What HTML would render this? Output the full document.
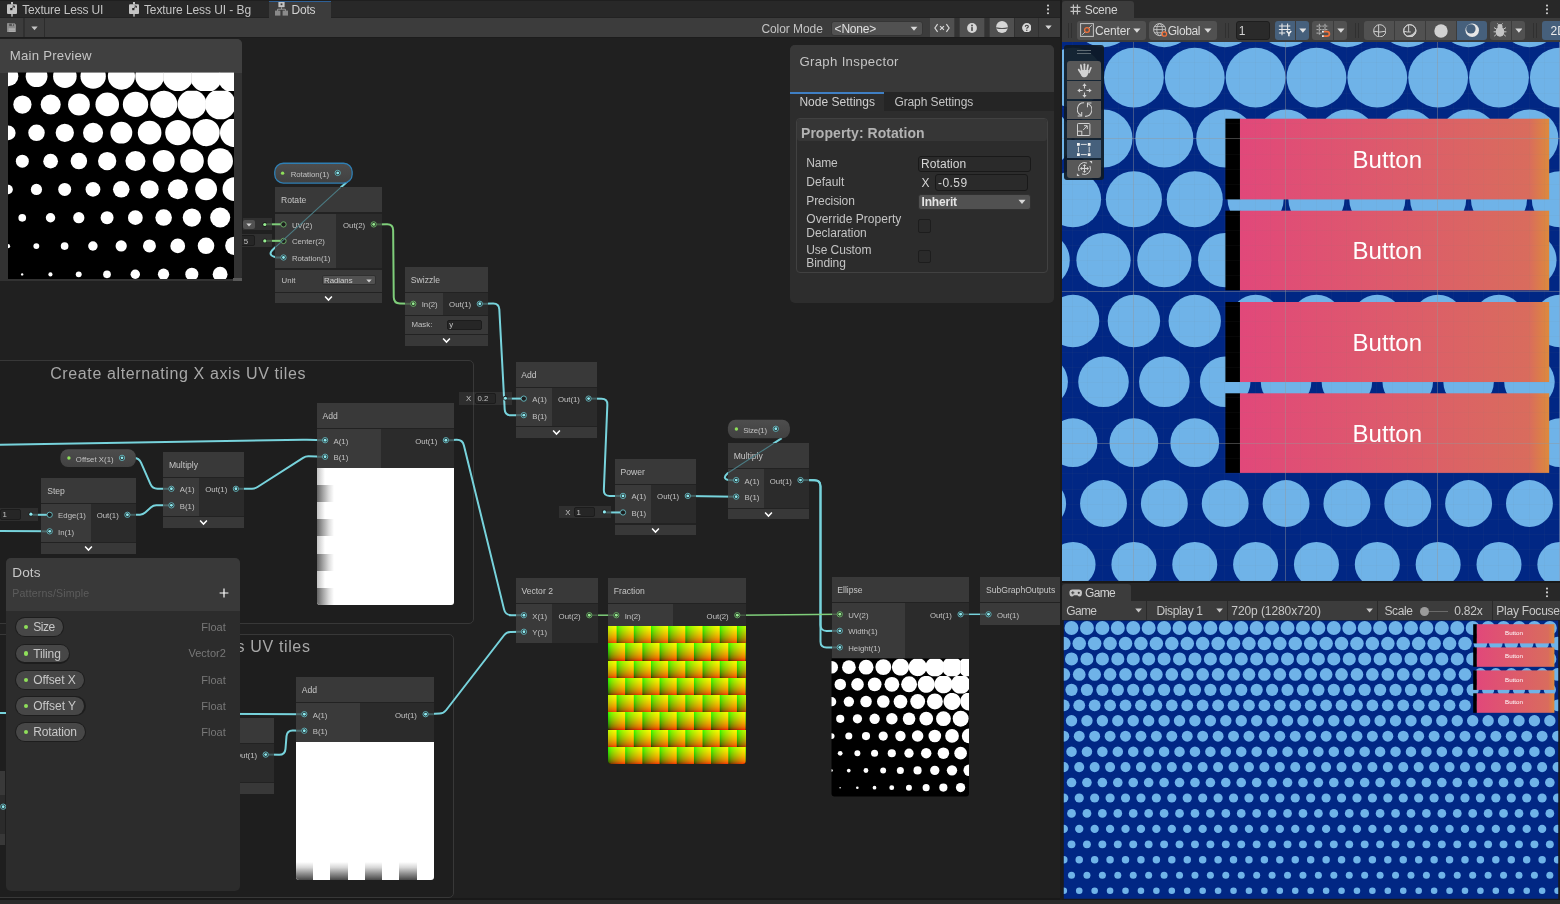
<!DOCTYPE html><html><head><meta charset="utf-8"><title>Unity</title><style>
*{box-sizing:border-box;margin:0;padding:0}
html,body{width:1560px;height:904px;overflow:hidden;background:#1b1b1b;font-family:"Liberation Sans",sans-serif;}
.b{position:absolute;display:block}
.t{position:absolute;white-space:nowrap;line-height:1;}
#L{will-change:transform;position:absolute;left:0;top:0;width:1059.5px;height:904px;overflow:hidden;background:#202020}
#R{will-change:transform;position:absolute;left:1062px;top:0;width:498px;height:904px;overflow:hidden;background:#1b1b1b}
svg{position:absolute;overflow:hidden}
</style></head><body>
<div id="L">
<div class="b" style="left:-10px;top:360px;width:484px;height:264.3px;border:1px solid #383838;border-radius:5px;background:rgba(0,0,0,0.06)"></div>
<div class="b" style="left:-10px;top:634.1px;width:463.5px;height:263.9px;border:1px solid #383838;border-radius:5px;background:rgba(0,0,0,0.06)"></div>
<div class="t" style="left:50.2px;top:365.86px;font-size:16px;color:#a8a8a8;letter-spacing:0.62px;">Create alternating X axis UV tiles</div>
<div class="t" style="left:54.6px;top:639.26px;font-size:16px;color:#a8a8a8;letter-spacing:0.64px;">Create alternating Y axis UV tiles</div>
<svg class="b" style="left:0;top:0" width="1060" height="904" viewBox="0 0 1060 904"><path d="M373.7,224.4L387.1,224.33Q393.1,224.3 393.15,230.3L393.75,297.3Q393.8,303.3 399.8,303.45L413.3,303.8" stroke="#7fce7a" stroke-width="2" fill="none" stroke-linecap="butt"/><path d="M479.8,303.8L493,303.52Q499,303.4 499.32,309.39L504.68,409.41Q505,415.4 511,415.32L523.8,415.15" stroke="#77d3dc" stroke-width="2" fill="none" stroke-linecap="butt"/><path d="M588.6,398.6L601.6,398.74Q607.6,398.8 607.35,404.79L603.85,489.91Q603.6,495.9 609.6,495.9L623,495.9" stroke="#77d3dc" stroke-width="2" fill="none" stroke-linecap="butt"/><path d="M687.8,495.9L736.2,496.65" stroke="#77d3dc" stroke-width="2" fill="none" stroke-linecap="butt"/><path d="M800.5,480.1L814.5,480.31Q820.5,480.4 820.5,486.4L820.5,624.9Q820.5,630.9 826.5,630.88L839.8,630.85" stroke="#77d3dc" stroke-width="2" fill="none" stroke-linecap="butt"/><path d="M800.5,480.1L814.5,480.31Q820.5,480.4 820.5,486.4L820.5,641.5Q820.5,647.5 826.5,647.47L839.8,647.4" stroke="#77d3dc" stroke-width="2" fill="none" stroke-linecap="butt"/><path d="M737.3,615.2L839.8,614.3" stroke="#7fce7a" stroke-width="1.5" fill="none" stroke-linecap="butt"/><path d="M589.3,615.2L616.3,615.2" stroke="#7fce7a" stroke-width="1.5" fill="none" stroke-linecap="butt"/><path d="M960.6,614.3L988.5,614.3" stroke="#77d3dc" stroke-width="1.5" fill="none" stroke-linecap="butt"/><path d="M445.9,440.2L456.5,439.82Q462.5,439.6 463.93,445.43L504.07,609.37Q505.5,615.2 511.5,615.2L523.9,615.2" stroke="#77d3dc" stroke-width="2" fill="none" stroke-linecap="butt"/><path d="M425.6,714.2L439.6,713.58Q443.6,713.4 446.05,710.24L504.05,635.26Q506.5,632.1 510.5,632.02L523.9,631.75" stroke="#77d3dc" stroke-width="2" fill="none" stroke-linecap="butt"/><path d="M-5,444.9L303,439.73Q305,439.7 307,439.75L325.1,440.2" stroke="#77d3dc" stroke-width="2" fill="none" stroke-linecap="butt"/><path d="M235.9,488.8L252,488.63Q255,488.6 257.53,486.99L303.07,457.91Q305.6,456.3 308.6,456.37L325.1,456.75" stroke="#77d3dc" stroke-width="2" fill="none" stroke-linecap="butt"/><path d="M122,458L134,458Q139,458 141.02,462.57L150.48,484.03Q152.5,488.6 157.5,488.65L171.4,488.8" stroke="#77d3dc" stroke-width="2" fill="none" stroke-linecap="butt"/><path d="M127.4,514.8L140,514.64Q143,514.6 145.22,512.58L151.08,507.22Q153.3,505.2 156.3,505.22L171.4,505.35" stroke="#77d3dc" stroke-width="2" fill="none" stroke-linecap="butt"/><path d="M-5,530.9L49.7,531.35" stroke="#77d3dc" stroke-width="2" fill="none" stroke-linecap="butt"/><path d="M265.7,754.6L279,754.74Q285,754.8 285.49,748.82L286.51,736.18Q287,730.2 293,730.39L304.3,730.75" stroke="#77d3dc" stroke-width="2" fill="none" stroke-linecap="butt"/><path d="M-5,713L304.3,714.2" stroke="#77d3dc" stroke-width="2" fill="none" stroke-linecap="butt"/><path d="M347.5,181.2 L345.7,182.9 L273.7,248.7 Q267.4,254.4 273.7,256.6 Q276,257.4 283.6,257.5" stroke="#77d3dc" stroke-width="2" fill="none"/><path d="M781.8,438.2 L727.6,473.2 Q721.6,478.5 728.6,479.9 L735.9,480.3" stroke="#77d3dc" stroke-width="2" fill="none"/></svg>
<svg class="b" style="left:0;top:0" width="1060" height="904" viewBox="0 0 1060 904"><defs><linearGradient id="pillg" x1="0" x2="0" y1="0" y2="1"><stop offset="0" stop-color="#4d4d4d"/><stop offset="1" stop-color="#414141"/></linearGradient></defs><rect x="274.75" y="163.25" width="77.4" height="19.8" rx="8.6" fill="url(#pillg)" stroke="#2f7fb4" stroke-width="1.3"/><rect x="727.9" y="419.8" width="62" height="18.4" rx="7.6" fill="url(#pillg)"/><rect x="60.4" y="449.2" width="75.5" height="17.7" rx="7.6" fill="url(#pillg)"/></svg>
<div class="t" style="left:290.7px;top:171.05px;font-size:7.8px;color:#c2c2c2;letter-spacing:-0.02px;">Rotation(1)</div><div class="b" style="left:275.2px;top:188.4px;width:106.8px;height:114.85px;background:#222222;"></div><div class="b" style="left:275.2px;top:187.4px;width:106.8px;height:25px;background:#393939;"></div><div class="t" style="left:281px;top:196.42px;font-size:8.6px;color:#c6c6c6;">Rotate</div><div class="b" style="left:275.2px;top:212.4px;width:106.8px;height:1.1px;background:#222222;"></div><div class="b" style="left:275.2px;top:213.5px;width:60.8px;height:54.95px;background:#3a3a3a;"></div><div class="b" style="left:336px;top:213.5px;width:46px;height:54.95px;background:#2b2b2b;"></div><div class="t" style="left:291.9px;top:221.9px;font-size:7.8px;color:#c2c2c2;">UV(2)</div><div class="t" style="left:291.9px;top:238.45px;font-size:7.8px;color:#c2c2c2;">Center(2)</div><div class="t" style="left:291.9px;top:255px;font-size:7.8px;color:#c2c2c2;">Rotation(1)</div><div class="t" style="left:342.99px;top:221.9px;font-size:7.8px;color:#c2c2c2;">Out(2)</div><div class="b" style="left:275.2px;top:268.45px;width:106.8px;height:1.1px;background:#222222;"></div><div class="b" style="left:275.2px;top:269.55px;width:106.8px;height:22px;background:#393939;"></div><div class="t" style="left:281.6px;top:276.75px;font-size:7.8px;color:#c2c2c2;">Unit</div><div class="b" style="left:322px;top:275.35px;width:54px;height:10px;background:#515151;border-radius:2px;border:0.6px solid #303030"></div><div class="t" style="left:324px;top:276.65px;font-size:7.8px;color:#d0d0d0;">Radians</div><svg class="b" style="left:366.4px;top:278.75px" width="6" height="4" viewBox="0 0 6 4"><path d="M0.3,0.4 L5.7,0.4 L3,3.6Z" fill="#d0d0d0"/></svg><div class="b" style="left:275.2px;top:291.55px;width:106.8px;height:1.1px;background:#222222;"></div><div class="b" style="left:275.2px;top:292.65px;width:106.8px;height:10.6px;background:#383838;"></div><svg class="b" style="left:324.1px;top:294.65px" width="9" height="7" viewBox="0 0 9 7"><path d="M1.1,1.5 L4.5,5.1 L7.9,1.5" stroke="#fff" stroke-width="1.5" fill="none"/></svg><div class="b" style="left:405px;top:267.8px;width:83.1px;height:77.95px;background:#222222;"></div><div class="b" style="left:405px;top:266.8px;width:83.1px;height:25px;background:#393939;"></div><div class="t" style="left:410.8px;top:275.82px;font-size:8.6px;color:#c6c6c6;">Swizzle</div><div class="b" style="left:405px;top:291.8px;width:83.1px;height:1.1px;background:#222222;"></div><div class="b" style="left:405px;top:292.9px;width:38.2px;height:21.85px;background:#3a3a3a;"></div><div class="b" style="left:443.2px;top:292.9px;width:44.9px;height:21.85px;background:#2b2b2b;"></div><div class="t" style="left:421.7px;top:301.3px;font-size:7.8px;color:#c2c2c2;">In(2)</div><div class="t" style="left:449.09px;top:301.3px;font-size:7.8px;color:#c2c2c2;">Out(1)</div><div class="b" style="left:405px;top:314.75px;width:83.1px;height:1.1px;background:#222222;"></div><div class="b" style="left:405px;top:315.85px;width:83.1px;height:18.2px;background:#393939;"></div><div class="t" style="left:411.5px;top:321.15px;font-size:7.8px;color:#c2c2c2;">Mask:</div><div class="b" style="left:447.1px;top:319.75px;width:34.5px;height:10.4px;background:#262626;border:1px solid #1c1c1c;border-radius:2px"></div><div class="t" style="left:449.3px;top:320.85px;font-size:7.8px;color:#c2c2c2;">y</div><div class="b" style="left:405px;top:334.05px;width:83.1px;height:1.1px;background:#222222;"></div><div class="b" style="left:405px;top:335.15px;width:83.1px;height:10.6px;background:#383838;"></div><svg class="b" style="left:442.05px;top:337.15px" width="9" height="7" viewBox="0 0 9 7"><path d="M1.1,1.5 L4.5,5.1 L7.9,1.5" stroke="#fff" stroke-width="1.5" fill="none"/></svg><div class="b" style="left:515.5px;top:362.6px;width:81.4px;height:75.2px;background:#222222;"></div><div class="b" style="left:515.5px;top:361.6px;width:81.4px;height:25px;background:#393939;"></div><div class="t" style="left:521.3px;top:370.62px;font-size:8.6px;color:#c6c6c6;">Add</div><div class="b" style="left:515.5px;top:386.6px;width:81.4px;height:1.1px;background:#222222;"></div><div class="b" style="left:515.5px;top:387.7px;width:36.7px;height:38.4px;background:#3a3a3a;"></div><div class="b" style="left:552.2px;top:387.7px;width:44.7px;height:38.4px;background:#2b2b2b;"></div><div class="t" style="left:532.2px;top:396.1px;font-size:7.8px;color:#c2c2c2;">A(1)</div><div class="t" style="left:532.2px;top:412.65px;font-size:7.8px;color:#c2c2c2;">B(1)</div><div class="t" style="left:557.89px;top:396.1px;font-size:7.8px;color:#c2c2c2;">Out(1)</div><div class="b" style="left:515.5px;top:426.1px;width:81.4px;height:1.1px;background:#222222;"></div><div class="b" style="left:515.5px;top:427.2px;width:81.4px;height:10.6px;background:#383838;"></div><svg class="b" style="left:551.7px;top:429.2px" width="9" height="7" viewBox="0 0 9 7"><path d="M1.1,1.5 L4.5,5.1 L7.9,1.5" stroke="#fff" stroke-width="1.5" fill="none"/></svg><div class="b" style="left:614.7px;top:459.9px;width:81.4px;height:75.2px;background:#222222;"></div><div class="b" style="left:614.7px;top:458.9px;width:81.4px;height:25px;background:#393939;"></div><div class="t" style="left:620.5px;top:467.92px;font-size:8.6px;color:#c6c6c6;">Power</div><div class="b" style="left:614.7px;top:483.9px;width:81.4px;height:1.1px;background:#222222;"></div><div class="b" style="left:614.7px;top:485px;width:36.3px;height:38.4px;background:#3a3a3a;"></div><div class="b" style="left:651px;top:485px;width:45.1px;height:38.4px;background:#2b2b2b;"></div><div class="t" style="left:631.4px;top:493.4px;font-size:7.8px;color:#c2c2c2;">A(1)</div><div class="t" style="left:631.4px;top:509.95px;font-size:7.8px;color:#c2c2c2;">B(1)</div><div class="t" style="left:657.09px;top:493.4px;font-size:7.8px;color:#c2c2c2;">Out(1)</div><div class="b" style="left:614.7px;top:523.4px;width:81.4px;height:1.1px;background:#222222;"></div><div class="b" style="left:614.7px;top:524.5px;width:81.4px;height:10.6px;background:#383838;"></div><svg class="b" style="left:650.9px;top:526.5px" width="9" height="7" viewBox="0 0 9 7"><path d="M1.1,1.5 L4.5,5.1 L7.9,1.5" stroke="#fff" stroke-width="1.5" fill="none"/></svg><div class="t" style="left:743.3px;top:426.9px;font-size:7.8px;color:#c2c2c2;letter-spacing:-0.14px;">Size(1)</div><div class="b" style="left:727.9px;top:444.1px;width:80.9px;height:75.2px;background:#222222;"></div><div class="b" style="left:727.9px;top:443.1px;width:80.9px;height:25px;background:#393939;"></div><div class="t" style="left:733.7px;top:452.12px;font-size:8.6px;color:#c6c6c6;">Multiply</div><div class="b" style="left:727.9px;top:468.1px;width:80.9px;height:1.1px;background:#222222;"></div><div class="b" style="left:727.9px;top:469.2px;width:36.1px;height:38.4px;background:#3a3a3a;"></div><div class="b" style="left:764px;top:469.2px;width:44.8px;height:38.4px;background:#2b2b2b;"></div><div class="t" style="left:744.6px;top:477.6px;font-size:7.8px;color:#c2c2c2;">A(1)</div><div class="t" style="left:744.6px;top:494.15px;font-size:7.8px;color:#c2c2c2;">B(1)</div><div class="t" style="left:769.79px;top:477.6px;font-size:7.8px;color:#c2c2c2;">Out(1)</div><div class="b" style="left:727.9px;top:507.6px;width:80.9px;height:1.1px;background:#222222;"></div><div class="b" style="left:727.9px;top:508.7px;width:80.9px;height:10.6px;background:#383838;"></div><svg class="b" style="left:763.85px;top:510.7px" width="9" height="7" viewBox="0 0 9 7"><path d="M1.1,1.5 L4.5,5.1 L7.9,1.5" stroke="#fff" stroke-width="1.5" fill="none"/></svg><div class="b" style="left:831.5px;top:578.3px;width:137.4px;height:80.05px;background:#222222;"></div><div class="b" style="left:831.5px;top:577.3px;width:137.4px;height:25px;background:#393939;"></div><div class="t" style="left:837.3px;top:586.32px;font-size:8.6px;color:#c6c6c6;">Ellipse</div><div class="b" style="left:831.5px;top:602.3px;width:137.4px;height:1.1px;background:#222222;"></div><div class="b" style="left:831.5px;top:603.4px;width:73.5px;height:54.95px;background:#3a3a3a;"></div><div class="b" style="left:905px;top:603.4px;width:63.9px;height:54.95px;background:#2b2b2b;"></div><div class="t" style="left:848.2px;top:611.8px;font-size:7.8px;color:#c2c2c2;">UV(2)</div><div class="t" style="left:848.2px;top:628.35px;font-size:7.8px;color:#c2c2c2;">Width(1)</div><div class="t" style="left:848.2px;top:644.9px;font-size:7.8px;color:#c2c2c2;">Height(1)</div><div class="t" style="left:929.89px;top:611.8px;font-size:7.8px;color:#c2c2c2;">Out(1)</div><svg class="b" style="left:831px;top:658px" width="138" height="139" viewBox="0 0 138 139"><defs><clipPath id="hc1"><path d="M0.5,0.5H138V135.5Q138,138.5 135,138.5H3.5Q0.5,138.5 0.5,135.5Z"/></clipPath></defs><g clip-path="url(#hc1)"><rect x="0" y="0" width="138" height="139" fill="#000"/><g fill="#fff" transform="translate(0.5,0.9)"><circle cx="0.2" cy="8.29" r="6.3"/><circle cx="17.41" cy="8.26" r="6.86"/><circle cx="34.61" cy="8.24" r="7.41"/><circle cx="51.82" cy="8.21" r="7.97"/><polygon points="77.53,8.59 77.46,9.36 77.32,10.11 77.12,10.84 76.85,11.54 76.52,12.22 76.14,12.86 75.7,13.46 75.22,14.02 74.69,14.54 74.13,15 73.53,15.41 72.89,15.77 72.24,16.07 71.56,16.32 70.87,16.5 70.17,16.63 69.46,16.69 68.75,16.7 68.05,16.65 67.35,16.54 66.66,16.38 66,16.15 65.35,15.88 64.73,15.55 64.14,15.17 63.58,14.75 63.06,14.28 62.58,13.77 62.15,13.22 61.75,12.63 61.41,12.02 61.12,11.37 60.88,10.7 60.7,10.01 60.58,9.31 60.52,8.59 60.51,7.87 60.57,7.15 60.69,6.43 60.87,5.73 61.11,5.03 61.42,4.36 61.78,3.71 62.2,3.1 62.67,2.51 63.2,1.98 63.77,1.48 64.39,1.04 65.05,0.65 65.74,0.32 66.46,0.06 67.21,-0.14 67.98,-0.2 68.75,-0.2 69.52,-0.2 70.3,-0.2 71.08,-0.09 71.83,0.13 72.56,0.42 73.26,0.78 73.93,1.2 74.55,1.68 75.12,2.22 75.65,2.81 76.11,3.44 76.52,4.11 76.86,4.81 77.13,5.54 77.34,6.29 77.47,7.06 77.54,7.82"/><polygon points="94.73,8.59 94.73,9.36 94.73,10.14 94.73,10.95 94.57,11.73 94.22,12.46 93.81,13.14 93.35,13.78 92.83,14.38 92.27,14.93 91.67,15.42 91.02,15.86 90.35,16.24 89.65,16.56 88.93,16.82 88.19,17.02 87.45,17.15 86.69,17.22 85.94,17.23 85.19,17.18 84.44,17.06 83.72,16.88 83.01,16.65 82.32,16.36 81.66,16.01 81.03,15.6 80.43,15.15 79.88,14.65 79.37,14.11 78.9,13.52 78.48,12.9 78.12,12.24 77.81,11.55 77.56,10.84 77.36,10.11 77.23,9.36 77.17,8.59 77.16,7.83 77.22,7.06 77.35,6.29 77.54,5.54 77.8,4.8 78.13,4.08 78.51,3.39 78.96,2.74 79.46,2.12 80.02,1.54 80.63,1.02 81.29,0.54 81.99,0.13 82.74,-0.2 83.58,-0.2 84.39,-0.2 85.17,-0.2 85.94,-0.2 86.71,-0.2 87.49,-0.2 88.29,-0.2 89.14,-0.2 90,-0.11 90.74,0.27 91.45,0.72 92.12,1.23 92.73,1.8 93.28,2.43 93.78,3.1 94.21,3.82 94.57,4.57 94.73,5.39 94.73,6.24 94.73,7.04 94.73,7.82"/><polygon points="111.92,8.59 111.92,9.36 111.92,10.14 111.92,10.95 111.92,11.79 111.91,12.69 111.48,13.42 110.99,14.1 110.44,14.73 109.85,15.31 109.2,15.84 108.52,16.31 107.81,16.71 107.07,17.05 106.3,17.33 105.48,17.39 104.68,17.39 103.89,17.39 103.12,17.39 102.36,17.39 101.57,17.39 100.77,17.39 100.01,17.14 99.28,16.83 98.58,16.46 97.91,16.03 97.28,15.55 96.7,15.02 96.15,14.45 95.66,13.82 95.21,13.16 94.83,12.46 94.5,11.73 94.33,10.95 94.33,10.14 94.33,9.36 94.33,8.59 94.33,7.82 94.33,7.04 94.33,6.24 94.33,5.39 94.49,4.57 94.83,3.81 95.24,3.07 95.72,2.38 96.25,1.72 96.84,1.11 97.49,0.55 98.19,0.05 99.02,-0.2 99.92,-0.2 100.77,-0.2 101.57,-0.2 102.36,-0.2 103.12,-0.2 103.89,-0.2 104.68,-0.2 105.48,-0.2 106.33,-0.2 107.23,-0.2 108.2,-0.2 108.98,0.23 109.68,0.78 110.33,1.39 110.92,2.05 111.45,2.76 111.91,3.52 111.92,4.49 111.92,5.39 111.92,6.24 111.92,7.04 111.92,7.82"/><polygon points="129.11,8.59 129.11,9.36 129.11,10.14 129.11,10.95 129.11,11.79 129.11,12.69 129.11,13.67 128.63,14.42 128.05,15.09 127.42,15.7 126.74,16.26 126.02,16.75 125.27,17.18 124.41,17.39 123.51,17.39 122.67,17.39 121.86,17.39 121.08,17.39 120.31,17.39 119.54,17.39 118.76,17.39 117.96,17.39 117.11,17.39 116.25,17.31 115.51,16.92 114.8,16.47 114.13,15.96 113.51,15.4 112.94,14.78 112.41,14.13 111.94,13.43 111.53,12.69 111.52,11.79 111.52,10.95 111.52,10.14 111.52,9.36 111.52,8.59 111.52,7.82 111.52,7.04 111.52,6.24 111.52,5.39 111.52,4.49 111.54,3.53 111.97,2.75 112.47,2.02 113.04,1.32 113.67,0.68 114.36,0.09 115.24,-0.2 116.21,-0.2 117.11,-0.2 117.96,-0.2 118.76,-0.2 119.54,-0.2 120.31,-0.2 121.08,-0.2 121.86,-0.2 122.67,-0.2 123.51,-0.2 124.41,-0.2 125.39,-0.2 126.47,-0.2 127.25,0.33 127.94,0.97 128.56,1.67 129.11,2.44 129.11,3.52 129.11,4.49 129.11,5.39 129.11,6.24 129.11,7.04 129.11,7.82"/><polygon points="146.29,8.59 146.29,9.36 146.29,10.14 146.29,10.95 146.29,11.79 146.29,12.69 146.29,13.67 146.27,14.74 145.66,15.44 145,16.09 144.28,16.68 143.52,17.2 142.58,17.39 141.6,17.39 140.7,17.39 139.86,17.39 139.05,17.39 138.27,17.39 137.5,17.39 136.73,17.39 135.95,17.39 135.14,17.39 134.3,17.39 133.4,17.39 132.43,17.37 131.69,16.9 130.98,16.36 130.33,15.77 129.72,15.12 129.17,14.43 128.71,13.67 128.71,12.69 128.71,11.79 128.71,10.95 128.71,10.14 128.71,9.36 128.71,8.59 128.71,7.82 128.71,7.04 128.71,6.24 128.71,5.39 128.71,4.49 128.71,3.52 128.71,2.44 129.23,1.66 129.83,0.92 130.49,0.24 131.34,-0.2 132.42,-0.2 133.4,-0.2 134.3,-0.2 135.14,-0.2 135.95,-0.2 136.73,-0.2 137.5,-0.2 138.27,-0.2 139.05,-0.2 139.86,-0.2 140.7,-0.2 141.6,-0.2 142.58,-0.2 143.66,-0.2 144.82,-0.12 145.54,0.55 146.2,1.29 146.29,2.44 146.29,3.52 146.29,4.49 146.29,5.39 146.29,6.24 146.29,7.04 146.29,7.82"/><circle cx="8.78" cy="25.5" r="5.74"/><circle cx="25.99" cy="25.48" r="6.3"/><circle cx="43.19" cy="25.45" r="6.86"/><circle cx="60.4" cy="25.42" r="7.42"/><circle cx="77.6" cy="25.4" r="7.97"/><polygon points="103.32,25.78 103.25,26.54 103.11,27.29 102.9,28.02 102.63,28.73 102.31,29.41 101.92,30.05 101.49,30.65 101,31.21 100.48,31.73 99.91,32.19 99.31,32.6 98.68,32.96 98.02,33.26 97.34,33.51 96.65,33.69 95.95,33.82 95.24,33.89 94.53,33.89 93.83,33.84 93.13,33.73 92.45,33.57 91.78,33.35 91.13,33.07 90.51,32.74 89.92,32.36 89.36,31.94 88.84,31.47 88.36,30.96 87.92,30.41 87.53,29.82 87.19,29.2 86.9,28.56 86.66,27.89 86.48,27.2 86.36,26.5 86.29,25.78 86.29,25.06 86.35,24.34 86.47,23.62 86.65,22.91 86.89,22.22 87.2,21.55 87.56,20.9 87.98,20.28 88.45,19.7 88.98,19.16 89.55,18.67 90.17,18.22 90.83,17.84 91.52,17.51 92.24,17.24 92.99,17.04 93.76,16.99 94.53,16.99 95.3,16.99 96.08,16.99 96.86,17.09 97.61,17.31 98.34,17.6 99.04,17.96 99.71,18.39 100.33,18.87 100.91,19.4 101.43,19.99 101.9,20.62 102.3,21.3 102.64,22 102.92,22.73 103.12,23.48 103.26,24.24 103.32,25.01"/><polygon points="120.51,25.78 120.51,26.55 120.51,27.33 120.51,28.14 120.35,28.92 120,29.64 119.59,30.33 119.13,30.97 118.62,31.57 118.05,32.12 117.45,32.61 116.81,33.05 116.14,33.43 115.44,33.75 114.71,34.01 113.98,34.21 113.23,34.34 112.47,34.42 111.72,34.42 110.97,34.37 110.23,34.25 109.5,34.08 108.79,33.84 108.1,33.55 107.44,33.2 106.81,32.79 106.21,32.34 105.66,31.84 105.15,31.3 104.68,30.71 104.26,30.09 103.9,29.43 103.59,28.74 103.33,28.03 103.14,27.29 103.01,26.54 102.94,25.78 102.94,25.01 103,24.24 103.13,23.48 103.32,22.73 103.58,21.99 103.9,21.27 104.29,20.58 104.74,19.92 105.24,19.3 105.8,18.73 106.41,18.2 107.07,17.73 107.77,17.32 108.52,16.99 109.36,16.99 110.17,16.99 110.95,16.99 111.72,16.99 112.49,16.99 113.27,16.99 114.08,16.99 114.92,16.99 115.78,17.07 116.53,17.45 117.24,17.9 117.9,18.42 118.51,18.99 119.07,19.61 119.56,20.29 120,21 120.36,21.75 120.51,22.58 120.51,23.42 120.51,24.23 120.51,25.01"/><polygon points="137.7,25.78 137.7,26.55 137.7,27.33 137.7,28.14 137.7,28.98 137.7,29.88 137.27,30.61 136.77,31.29 136.23,31.92 135.63,32.5 134.99,33.03 134.31,33.5 133.59,33.9 132.85,34.24 132.09,34.52 131.26,34.58 130.46,34.58 129.68,34.58 128.91,34.58 128.14,34.58 127.36,34.58 126.55,34.58 125.79,34.33 125.06,34.02 124.36,33.65 123.69,33.23 123.06,32.74 122.47,32.21 121.93,31.64 121.43,31.01 120.99,30.35 120.6,29.65 120.28,28.92 120.11,28.14 120.11,27.33 120.11,26.55 120.11,25.78 120.11,25.01 120.11,24.23 120.11,23.42 120.11,22.58 120.27,21.75 120.61,20.99 121.02,20.26 121.49,19.56 122.03,18.9 122.62,18.29 123.27,17.74 123.97,17.23 124.81,16.99 125.71,16.99 126.55,16.99 127.36,16.99 128.14,16.99 128.91,16.99 129.68,16.99 130.46,16.99 131.26,16.99 132.11,16.99 133.01,16.99 133.98,16.99 134.76,17.42 135.47,17.96 136.12,18.57 136.71,19.24 137.23,19.95 137.69,20.71 137.7,21.68 137.7,22.58 137.7,23.42 137.7,24.23 137.7,25.01"/><circle cx="0.15" cy="42.75" r="4.63"/><circle cx="17.36" cy="42.72" r="5.19"/><circle cx="34.56" cy="42.69" r="5.75"/><circle cx="51.77" cy="42.66" r="6.31"/><circle cx="68.97" cy="42.64" r="6.86"/><circle cx="86.18" cy="42.61" r="7.42"/><circle cx="103.38" cy="42.58" r="7.98"/><polygon points="129.1,42.97 129.03,43.73 128.89,44.48 128.69,45.21 128.42,45.92 128.09,46.6 127.71,47.24 127.27,47.84 126.79,48.4 126.26,48.92 125.69,49.38 125.09,49.79 124.46,50.15 123.8,50.45 123.13,50.7 122.43,50.88 121.73,51.01 121.02,51.08 120.31,51.08 119.61,51.03 118.91,50.92 118.23,50.76 117.56,50.54 116.91,50.26 116.29,49.93 115.7,49.55 115.14,49.13 114.62,48.66 114.14,48.15 113.7,47.6 113.31,47.01 112.97,46.39 112.68,45.75 112.44,45.08 112.26,44.39 112.14,43.68 112.07,42.97 112.07,42.25 112.13,41.53 112.25,40.81 112.43,40.1 112.67,39.41 112.97,38.73 113.34,38.08 113.75,37.47 114.23,36.88 114.75,36.34 115.33,35.85 115.95,35.41 116.61,35.02 117.3,34.69 118.02,34.42 118.77,34.22 119.54,34.17 120.31,34.17 121.08,34.17 121.86,34.17 122.64,34.27 123.4,34.5 124.13,34.79 124.83,35.15 125.49,35.57 126.12,36.05 126.69,36.59 127.21,37.18 127.68,37.81 128.09,38.48 128.43,39.19 128.7,39.92 128.91,40.67 129.04,41.43 129.11,42.2"/><polygon points="146.29,42.97 146.29,43.74 146.29,44.52 146.29,45.33 146.14,46.11 145.79,46.83 145.38,47.52 144.91,48.16 144.4,48.76 143.84,49.31 143.23,49.8 142.59,50.24 141.92,50.62 141.22,50.94 140.5,51.2 139.76,51.4 139.01,51.53 138.26,51.61 137.5,51.61 136.75,51.56 136.01,51.44 135.28,51.27 134.57,51.03 133.88,50.74 133.22,50.39 132.59,49.98 131.99,49.53 131.44,49.03 130.92,48.49 130.46,47.9 130.04,47.28 129.68,46.62 129.37,45.93 129.11,45.22 128.92,44.48 128.79,43.73 128.72,42.97 128.72,42.2 128.78,41.43 128.91,40.67 129.1,39.91 129.36,39.17 129.68,38.45 130.07,37.76 130.51,37.11 131.02,36.49 131.58,35.91 132.19,35.39 132.85,34.91 133.55,34.5 134.3,34.17 135.14,34.17 135.95,34.17 136.73,34.17 137.5,34.17 138.27,34.17 139.05,34.17 139.86,34.17 140.7,34.17 141.56,34.25 142.31,34.64 143.02,35.09 143.68,35.6 144.3,36.17 144.85,36.8 145.35,37.47 145.78,38.19 146.14,38.94 146.29,39.77 146.29,40.61 146.29,41.42 146.29,42.2"/><circle cx="8.73" cy="59.96" r="4.08"/><circle cx="25.93" cy="59.93" r="4.64"/><circle cx="43.14" cy="59.91" r="5.19"/><circle cx="60.34" cy="59.88" r="5.75"/><circle cx="77.55" cy="59.85" r="6.31"/><circle cx="94.75" cy="59.82" r="6.87"/><circle cx="111.96" cy="59.8" r="7.42"/><circle cx="129.16" cy="59.77" r="7.98"/><circle cx="0.1" cy="77.2" r="2.97"/><circle cx="17.3" cy="77.17" r="3.52"/><circle cx="34.51" cy="77.15" r="4.08"/><circle cx="51.71" cy="77.12" r="4.64"/><circle cx="68.92" cy="77.09" r="5.2"/><circle cx="86.12" cy="77.07" r="5.75"/><circle cx="103.33" cy="77.04" r="6.31"/><circle cx="120.53" cy="77.01" r="6.87"/><circle cx="137.74" cy="76.98" r="7.43"/><circle cx="8.67" cy="94.41" r="2.41"/><circle cx="25.88" cy="94.39" r="2.97"/><circle cx="43.08" cy="94.36" r="3.53"/><circle cx="60.29" cy="94.33" r="4.09"/><circle cx="77.49" cy="94.31" r="4.64"/><circle cx="94.7" cy="94.28" r="5.2"/><circle cx="111.9" cy="94.25" r="5.76"/><circle cx="129.11" cy="94.23" r="6.32"/><circle cx="0.04" cy="111.66" r="1.3"/><circle cx="17.25" cy="111.63" r="1.86"/><circle cx="34.45" cy="111.6" r="2.42"/><circle cx="51.66" cy="111.58" r="2.97"/><circle cx="68.86" cy="111.55" r="3.53"/><circle cx="86.07" cy="111.52" r="4.09"/><circle cx="103.28" cy="111.49" r="4.65"/><circle cx="120.48" cy="111.47" r="5.2"/><circle cx="137.69" cy="111.44" r="5.76"/><circle cx="8.62" cy="128.87" r="0.75"/><circle cx="25.82" cy="128.84" r="1.3"/><circle cx="43.03" cy="128.82" r="1.86"/><circle cx="60.23" cy="128.79" r="2.42"/><circle cx="77.44" cy="128.76" r="2.98"/><circle cx="94.65" cy="128.74" r="3.53"/><circle cx="111.85" cy="128.71" r="4.09"/><circle cx="129.06" cy="128.68" r="4.65"/></g></g></svg><div class="b" style="left:980.2px;top:578.3px;width:90px;height:46.95px;background:#222222;"></div><div class="b" style="left:980.2px;top:577.3px;width:90px;height:25px;background:#393939;"></div><div class="t" style="left:986px;top:585.52px;font-size:8.6px;color:#c6c6c6;">SubGraphOutputs</div><div class="b" style="left:980.2px;top:602.3px;width:90px;height:1.1px;background:#222222;"></div><div class="b" style="left:980.2px;top:603.4px;width:90px;height:21.85px;background:#3a3a3a;"></div><div class="b" style="left:1070.2px;top:603.4px;width:0px;height:21.85px;background:#2b2b2b;"></div><div class="t" style="left:996.9px;top:611.8px;font-size:7.8px;color:#c2c2c2;">Out(1)</div><div class="b" style="left:515.6px;top:579.2px;width:82px;height:63.5px;background:#222222;"></div><div class="b" style="left:515.6px;top:578.2px;width:82px;height:25px;background:#393939;"></div><div class="t" style="left:521.4px;top:587.22px;font-size:8.6px;color:#c6c6c6;">Vector 2</div><div class="b" style="left:515.6px;top:603.2px;width:82px;height:1.1px;background:#222222;"></div><div class="b" style="left:515.6px;top:604.3px;width:36px;height:38.4px;background:#3a3a3a;"></div><div class="b" style="left:551.6px;top:604.3px;width:46px;height:38.4px;background:#2b2b2b;"></div><div class="t" style="left:532.3px;top:612.7px;font-size:7.8px;color:#c2c2c2;">X(1)</div><div class="t" style="left:532.3px;top:629.25px;font-size:7.8px;color:#c2c2c2;">Y(1)</div><div class="t" style="left:558.59px;top:612.7px;font-size:7.8px;color:#c2c2c2;">Out(2)</div><div class="b" style="left:608px;top:579.2px;width:137.6px;height:46.95px;background:#222222;"></div><div class="b" style="left:608px;top:578.2px;width:137.6px;height:25px;background:#393939;"></div><div class="t" style="left:613.8px;top:587.22px;font-size:8.6px;color:#c6c6c6;">Fraction</div><div class="b" style="left:608px;top:603.2px;width:137.6px;height:1.1px;background:#222222;"></div><div class="b" style="left:608px;top:604.3px;width:65.1px;height:21.85px;background:#3a3a3a;"></div><div class="b" style="left:673.1px;top:604.3px;width:72.5px;height:21.85px;background:#2b2b2b;"></div><div class="t" style="left:624.7px;top:612.7px;font-size:7.8px;color:#c2c2c2;">In(2)</div><div class="t" style="left:706.59px;top:612.7px;font-size:7.8px;color:#c2c2c2;">Out(2)</div><div class="b" style="left:608px;top:626.15px;width:137.6px;height:138px;background:#000;border-radius:0 0 3px 3px;overflow:hidden"><div class="b" style="left:0;top:0px;width:137.6px;height:17.55px;background-image:linear-gradient(90deg,rgb(0,0,0) 0%,rgb(43,0,0) 2%,rgb(65,0,0) 5%,rgb(90,0,0) 10%,rgb(123,0,0) 20%,rgb(158,0,0) 35%,rgb(194,0,0) 55%,rgb(224,0,0) 75%,rgb(255,0,0) 100%),linear-gradient(0deg,rgb(0,0,0) 0%,rgb(0,43,0) 2%,rgb(0,65,0) 5%,rgb(0,90,0) 10%,rgb(0,123,0) 20%,rgb(0,158,0) 35%,rgb(0,194,0) 55%,rgb(0,224,0) 75%,rgb(0,255,0) 100%);background-size:17.2px 17.55px;background-position:-8.6px 0;background-blend-mode:screen"></div><div class="b" style="left:0;top:17.25px;width:137.6px;height:17.55px;background-image:linear-gradient(90deg,rgb(0,0,0) 0%,rgb(43,0,0) 2%,rgb(65,0,0) 5%,rgb(90,0,0) 10%,rgb(123,0,0) 20%,rgb(158,0,0) 35%,rgb(194,0,0) 55%,rgb(224,0,0) 75%,rgb(255,0,0) 100%),linear-gradient(0deg,rgb(0,0,0) 0%,rgb(0,43,0) 2%,rgb(0,65,0) 5%,rgb(0,90,0) 10%,rgb(0,123,0) 20%,rgb(0,158,0) 35%,rgb(0,194,0) 55%,rgb(0,224,0) 75%,rgb(0,255,0) 100%);background-size:17.2px 17.55px;background-position:0px 0;background-blend-mode:screen"></div><div class="b" style="left:0;top:34.5px;width:137.6px;height:17.55px;background-image:linear-gradient(90deg,rgb(0,0,0) 0%,rgb(43,0,0) 2%,rgb(65,0,0) 5%,rgb(90,0,0) 10%,rgb(123,0,0) 20%,rgb(158,0,0) 35%,rgb(194,0,0) 55%,rgb(224,0,0) 75%,rgb(255,0,0) 100%),linear-gradient(0deg,rgb(0,0,0) 0%,rgb(0,43,0) 2%,rgb(0,65,0) 5%,rgb(0,90,0) 10%,rgb(0,123,0) 20%,rgb(0,158,0) 35%,rgb(0,194,0) 55%,rgb(0,224,0) 75%,rgb(0,255,0) 100%);background-size:17.2px 17.55px;background-position:-8.6px 0;background-blend-mode:screen"></div><div class="b" style="left:0;top:51.75px;width:137.6px;height:17.55px;background-image:linear-gradient(90deg,rgb(0,0,0) 0%,rgb(43,0,0) 2%,rgb(65,0,0) 5%,rgb(90,0,0) 10%,rgb(123,0,0) 20%,rgb(158,0,0) 35%,rgb(194,0,0) 55%,rgb(224,0,0) 75%,rgb(255,0,0) 100%),linear-gradient(0deg,rgb(0,0,0) 0%,rgb(0,43,0) 2%,rgb(0,65,0) 5%,rgb(0,90,0) 10%,rgb(0,123,0) 20%,rgb(0,158,0) 35%,rgb(0,194,0) 55%,rgb(0,224,0) 75%,rgb(0,255,0) 100%);background-size:17.2px 17.55px;background-position:0px 0;background-blend-mode:screen"></div><div class="b" style="left:0;top:69px;width:137.6px;height:17.55px;background-image:linear-gradient(90deg,rgb(0,0,0) 0%,rgb(43,0,0) 2%,rgb(65,0,0) 5%,rgb(90,0,0) 10%,rgb(123,0,0) 20%,rgb(158,0,0) 35%,rgb(194,0,0) 55%,rgb(224,0,0) 75%,rgb(255,0,0) 100%),linear-gradient(0deg,rgb(0,0,0) 0%,rgb(0,43,0) 2%,rgb(0,65,0) 5%,rgb(0,90,0) 10%,rgb(0,123,0) 20%,rgb(0,158,0) 35%,rgb(0,194,0) 55%,rgb(0,224,0) 75%,rgb(0,255,0) 100%);background-size:17.2px 17.55px;background-position:-8.6px 0;background-blend-mode:screen"></div><div class="b" style="left:0;top:86.25px;width:137.6px;height:17.55px;background-image:linear-gradient(90deg,rgb(0,0,0) 0%,rgb(43,0,0) 2%,rgb(65,0,0) 5%,rgb(90,0,0) 10%,rgb(123,0,0) 20%,rgb(158,0,0) 35%,rgb(194,0,0) 55%,rgb(224,0,0) 75%,rgb(255,0,0) 100%),linear-gradient(0deg,rgb(0,0,0) 0%,rgb(0,43,0) 2%,rgb(0,65,0) 5%,rgb(0,90,0) 10%,rgb(0,123,0) 20%,rgb(0,158,0) 35%,rgb(0,194,0) 55%,rgb(0,224,0) 75%,rgb(0,255,0) 100%);background-size:17.2px 17.55px;background-position:0px 0;background-blend-mode:screen"></div><div class="b" style="left:0;top:103.5px;width:137.6px;height:17.55px;background-image:linear-gradient(90deg,rgb(0,0,0) 0%,rgb(43,0,0) 2%,rgb(65,0,0) 5%,rgb(90,0,0) 10%,rgb(123,0,0) 20%,rgb(158,0,0) 35%,rgb(194,0,0) 55%,rgb(224,0,0) 75%,rgb(255,0,0) 100%),linear-gradient(0deg,rgb(0,0,0) 0%,rgb(0,43,0) 2%,rgb(0,65,0) 5%,rgb(0,90,0) 10%,rgb(0,123,0) 20%,rgb(0,158,0) 35%,rgb(0,194,0) 55%,rgb(0,224,0) 75%,rgb(0,255,0) 100%);background-size:17.2px 17.55px;background-position:-8.6px 0;background-blend-mode:screen"></div><div class="b" style="left:0;top:120.75px;width:137.6px;height:17.55px;background-image:linear-gradient(90deg,rgb(0,0,0) 0%,rgb(43,0,0) 2%,rgb(65,0,0) 5%,rgb(90,0,0) 10%,rgb(123,0,0) 20%,rgb(158,0,0) 35%,rgb(194,0,0) 55%,rgb(224,0,0) 75%,rgb(255,0,0) 100%),linear-gradient(0deg,rgb(0,0,0) 0%,rgb(0,43,0) 2%,rgb(0,65,0) 5%,rgb(0,90,0) 10%,rgb(0,123,0) 20%,rgb(0,158,0) 35%,rgb(0,194,0) 55%,rgb(0,224,0) 75%,rgb(0,255,0) 100%);background-size:17.2px 17.55px;background-position:0px 0;background-blend-mode:screen"></div></div><div class="b" style="left:316.8px;top:404.2px;width:137.4px;height:63.5px;background:#222222;"></div><div class="b" style="left:316.8px;top:403.2px;width:137.4px;height:25px;background:#393939;"></div><div class="t" style="left:322.6px;top:412.22px;font-size:8.6px;color:#c6c6c6;">Add</div><div class="b" style="left:316.8px;top:428.2px;width:137.4px;height:1.1px;background:#222222;"></div><div class="b" style="left:316.8px;top:429.3px;width:64.4px;height:38.4px;background:#3a3a3a;"></div><div class="b" style="left:381.2px;top:429.3px;width:73px;height:38.4px;background:#2b2b2b;"></div><div class="t" style="left:333.5px;top:437.7px;font-size:7.8px;color:#c2c2c2;">A(1)</div><div class="t" style="left:333.5px;top:454.25px;font-size:7.8px;color:#c2c2c2;">B(1)</div><div class="t" style="left:415.19px;top:437.7px;font-size:7.8px;color:#c2c2c2;">Out(1)</div><div class="b" style="left:316.8px;top:467.7px;width:137.4px;height:137.4px;background:#fff;border-radius:0 0 3px 3px;overflow:hidden"><div class="b" style="left:0;top:0px;width:8px;height:17.19px;background:linear-gradient(90deg,#c2c2c2 0,#fff 100%)"></div><div class="b" style="left:0;top:17.19px;width:17px;height:17.19px;background:linear-gradient(90deg,#646464 0,#a4a4a4 35%,#dedede 70%,#fff 100%)"></div><div class="b" style="left:0;top:34.38px;width:8px;height:17.19px;background:linear-gradient(90deg,#c2c2c2 0,#fff 100%)"></div><div class="b" style="left:0;top:51.56px;width:17px;height:17.19px;background:linear-gradient(90deg,#646464 0,#a4a4a4 35%,#dedede 70%,#fff 100%)"></div><div class="b" style="left:0;top:68.75px;width:8px;height:17.19px;background:linear-gradient(90deg,#c2c2c2 0,#fff 100%)"></div><div class="b" style="left:0;top:85.94px;width:17px;height:17.19px;background:linear-gradient(90deg,#646464 0,#a4a4a4 35%,#dedede 70%,#fff 100%)"></div><div class="b" style="left:0;top:103.12px;width:8px;height:17.19px;background:linear-gradient(90deg,#c2c2c2 0,#fff 100%)"></div><div class="b" style="left:0;top:120.31px;width:17px;height:17.19px;background:linear-gradient(90deg,#646464 0,#a4a4a4 35%,#dedede 70%,#fff 100%)"></div></div><div class="b" style="left:296px;top:678.2px;width:137.9px;height:63.5px;background:#222222;"></div><div class="b" style="left:296px;top:677.2px;width:137.9px;height:25px;background:#393939;"></div><div class="t" style="left:301.8px;top:686.22px;font-size:8.6px;color:#c6c6c6;">Add</div><div class="b" style="left:296px;top:702.2px;width:137.9px;height:1.1px;background:#222222;"></div><div class="b" style="left:296px;top:703.3px;width:64.4px;height:38.4px;background:#3a3a3a;"></div><div class="b" style="left:360.4px;top:703.3px;width:73.5px;height:38.4px;background:#2b2b2b;"></div><div class="t" style="left:312.7px;top:711.7px;font-size:7.8px;color:#c2c2c2;">A(1)</div><div class="t" style="left:312.7px;top:728.25px;font-size:7.8px;color:#c2c2c2;">B(1)</div><div class="t" style="left:394.89px;top:711.7px;font-size:7.8px;color:#c2c2c2;">Out(1)</div><div class="b" style="left:296px;top:741.7px;width:137.9px;height:138.2px;background:#fff;border-radius:0 0 3px 3px;overflow:hidden"><div class="b" style="left:0px;bottom:0;width:17.24px;height:18px;background:linear-gradient(0deg,#484848 0,#8e8e8e 35%,#d8d8d8 70%,#fff 100%)"></div><div class="b" style="left:34.48px;bottom:0;width:17.24px;height:18px;background:linear-gradient(0deg,#484848 0,#8e8e8e 35%,#d8d8d8 70%,#fff 100%)"></div><div class="b" style="left:68.95px;bottom:0;width:17.24px;height:18px;background:linear-gradient(0deg,#484848 0,#8e8e8e 35%,#d8d8d8 70%,#fff 100%)"></div><div class="b" style="left:103.43px;bottom:0;width:17.24px;height:18px;background:linear-gradient(0deg,#484848 0,#8e8e8e 35%,#d8d8d8 70%,#fff 100%)"></div></div><div class="t" style="left:75.8px;top:455.95px;font-size:7.8px;color:#c2c2c2;letter-spacing:0.03px;">Offset X(1)</div><div class="b" style="left:41.4px;top:478.8px;width:94.3px;height:75.2px;background:#222222;"></div><div class="b" style="left:41.4px;top:477.8px;width:94.3px;height:25px;background:#393939;"></div><div class="t" style="left:47.2px;top:486.82px;font-size:8.6px;color:#c6c6c6;">Step</div><div class="b" style="left:41.4px;top:502.8px;width:94.3px;height:1.1px;background:#222222;"></div><div class="b" style="left:41.4px;top:503.9px;width:49.2px;height:38.4px;background:#3a3a3a;"></div><div class="b" style="left:90.6px;top:503.9px;width:45.1px;height:38.4px;background:#2b2b2b;"></div><div class="t" style="left:58.1px;top:512.3px;font-size:7.8px;color:#c2c2c2;">Edge(1)</div><div class="t" style="left:58.1px;top:528.85px;font-size:7.8px;color:#c2c2c2;">In(1)</div><div class="t" style="left:96.69px;top:512.3px;font-size:7.8px;color:#c2c2c2;">Out(1)</div><div class="b" style="left:41.4px;top:542.3px;width:94.3px;height:1.1px;background:#222222;"></div><div class="b" style="left:41.4px;top:543.4px;width:94.3px;height:10.6px;background:#383838;"></div><svg class="b" style="left:84.05px;top:545.4px" width="9" height="7" viewBox="0 0 9 7"><path d="M1.1,1.5 L4.5,5.1 L7.9,1.5" stroke="#fff" stroke-width="1.5" fill="none"/></svg><div class="b" style="left:163.1px;top:452.8px;width:81.1px;height:75.2px;background:#222222;"></div><div class="b" style="left:163.1px;top:451.8px;width:81.1px;height:25px;background:#393939;"></div><div class="t" style="left:168.9px;top:460.82px;font-size:8.6px;color:#c6c6c6;">Multiply</div><div class="b" style="left:163.1px;top:476.8px;width:81.1px;height:1.1px;background:#222222;"></div><div class="b" style="left:163.1px;top:477.9px;width:36px;height:38.4px;background:#3a3a3a;"></div><div class="b" style="left:199.1px;top:477.9px;width:45.1px;height:38.4px;background:#2b2b2b;"></div><div class="t" style="left:179.8px;top:486.3px;font-size:7.8px;color:#c2c2c2;">A(1)</div><div class="t" style="left:179.8px;top:502.85px;font-size:7.8px;color:#c2c2c2;">B(1)</div><div class="t" style="left:205.19px;top:486.3px;font-size:7.8px;color:#c2c2c2;">Out(1)</div><div class="b" style="left:163.1px;top:516.3px;width:81.1px;height:1.1px;background:#222222;"></div><div class="b" style="left:163.1px;top:517.4px;width:81.1px;height:10.6px;background:#383838;"></div><svg class="b" style="left:199.15px;top:519.4px" width="9" height="7" viewBox="0 0 9 7"><path d="M1.1,1.5 L4.5,5.1 L7.9,1.5" stroke="#fff" stroke-width="1.5" fill="none"/></svg><div class="b" style="left:180px;top:718.6px;width:94px;height:75.2px;background:#222222;"></div><div class="b" style="left:180px;top:717.6px;width:94px;height:25px;background:#393939;"></div><div class="t" style="left:185.8px;top:726.62px;font-size:8.6px;color:#c6c6c6;"> </div><div class="b" style="left:180px;top:742.6px;width:94px;height:1.1px;background:#222222;"></div><div class="b" style="left:180px;top:743.7px;width:40px;height:38.4px;background:#3a3a3a;"></div><div class="b" style="left:220px;top:743.7px;width:54px;height:38.4px;background:#2b2b2b;"></div><div class="t" style="left:234.99px;top:752.1px;font-size:7.8px;color:#c2c2c2;">Out(1)</div><div class="b" style="left:180px;top:782.1px;width:94px;height:1.1px;background:#222222;"></div><div class="b" style="left:180px;top:783.2px;width:94px;height:10.6px;background:#383838;"></div><svg class="b" style="left:222.5px;top:785.2px" width="9" height="7" viewBox="0 0 9 7"><path d="M1.1,1.5 L4.5,5.1 L7.9,1.5" stroke="#fff" stroke-width="1.5" fill="none"/></svg><div class="b" style="left:-20px;top:770.5px;width:25px;height:24.5px;background:#393939;"></div><div class="b" style="left:-20px;top:795px;width:25px;height:39.3px;background:#2b2b2b;"></div><div class="b" style="left:-20px;top:834.3px;width:25px;height:10.7px;background:#383838;"></div><div class="b" style="left:459.4px;top:391.8px;width:52.4px;height:12.9px;background:rgba(255,255,255,0.075);"></div><div class="t" style="left:465.9px;top:395.45px;font-size:7.8px;color:#c2c2c2;">X</div><div class="b" style="left:475.2px;top:392.9px;width:20.5px;height:10.7px;background:#262626;border:1px solid #1c1c1c;border-radius:2px"></div><div class="t" style="left:477.4px;top:395.45px;font-size:7.8px;color:#c2c2c2;">0.2</div><div class="b" style="left:558.7px;top:505.5px;width:52.4px;height:12.9px;background:rgba(255,255,255,0.075);"></div><div class="t" style="left:565.2px;top:509.15px;font-size:7.8px;color:#c2c2c2;">X</div><div class="b" style="left:574.2px;top:506.6px;width:20.5px;height:10.7px;background:#262626;border:1px solid #1c1c1c;border-radius:2px"></div><div class="t" style="left:576.4px;top:509.15px;font-size:7.8px;color:#c2c2c2;">1</div><div class="b" style="left:-20px;top:507.6px;width:57.9px;height:13.2px;background:rgba(255,255,255,0.075);"></div><div class="b" style="left:0.4px;top:508.7px;width:20.5px;height:11px;background:#262626;border:1px solid #1c1c1c;border-radius:2px"></div><div class="t" style="left:2.6px;top:511.4px;font-size:7.8px;color:#c2c2c2;">1</div><div class="b" style="left:243px;top:217.6px;width:29px;height:12.3px;background:rgba(255,255,255,0.075);"></div><div class="b" style="left:243.2px;top:219.6px;width:12px;height:9.3px;background:#515151;border-radius:2px"></div><svg class="b" style="left:246.2px;top:222.6px" width="6" height="4" viewBox="0 0 6 4"><path d="M0.3,0.4 L5.7,0.4 L3,3.6Z" fill="#d0d0d0"/></svg><div class="b" style="left:236px;top:234.2px;width:36px;height:12.9px;background:rgba(255,255,255,0.075);"></div><div class="b" style="left:230px;top:235.3px;width:24.7px;height:10.7px;background:#262626;border:1px solid #1c1c1c;border-radius:2px"></div><div class="t" style="left:243.7px;top:237.8px;font-size:7.8px;color:#c2c2c2;">5</div>
<svg class="b" style="left:0;top:0" width="1060" height="904" viewBox="0 0 1060 904"><circle cx="282.6" cy="173.15" r="1.7" fill="#8fe05a"/><circle cx="337.7" cy="172.95" r="2.65" fill="#1c1c1c" stroke="#68bcc4" stroke-width="0.9"/><circle cx="337.7" cy="172.95" r="1.45" fill="#8eeaf0"/><circle cx="283.5" cy="224.4" r="2.65" fill="#1c1c1c" stroke="#70b96c" stroke-width="0.9"/><circle cx="283.5" cy="240.95" r="2.65" fill="#1c1c1c" stroke="#70b96c" stroke-width="0.9"/><circle cx="283.5" cy="257.5" r="2.65" fill="#1c1c1c" stroke="#68bcc4" stroke-width="0.9"/><circle cx="283.5" cy="257.5" r="1.45" fill="#8eeaf0"/><circle cx="373.7" cy="224.4" r="2.65" fill="#1c1c1c" stroke="#70b96c" stroke-width="0.9"/><circle cx="373.7" cy="224.4" r="1.45" fill="#98ee92"/><circle cx="413.3" cy="303.8" r="2.65" fill="#1c1c1c" stroke="#70b96c" stroke-width="0.9"/><circle cx="413.3" cy="303.8" r="1.45" fill="#98ee92"/><circle cx="479.8" cy="303.8" r="2.65" fill="#1c1c1c" stroke="#68bcc4" stroke-width="0.9"/><circle cx="479.8" cy="303.8" r="1.45" fill="#8eeaf0"/><circle cx="523.8" cy="398.6" r="2.65" fill="#1c1c1c" stroke="#68bcc4" stroke-width="0.9"/><circle cx="523.8" cy="415.15" r="2.65" fill="#1c1c1c" stroke="#68bcc4" stroke-width="0.9"/><circle cx="523.8" cy="415.15" r="1.45" fill="#8eeaf0"/><circle cx="588.6" cy="398.6" r="2.65" fill="#1c1c1c" stroke="#68bcc4" stroke-width="0.9"/><circle cx="588.6" cy="398.6" r="1.45" fill="#8eeaf0"/><circle cx="623" cy="495.9" r="2.65" fill="#1c1c1c" stroke="#68bcc4" stroke-width="0.9"/><circle cx="623" cy="495.9" r="1.45" fill="#8eeaf0"/><circle cx="623" cy="512.45" r="2.65" fill="#1c1c1c" stroke="#68bcc4" stroke-width="0.9"/><circle cx="687.8" cy="495.9" r="2.65" fill="#1c1c1c" stroke="#68bcc4" stroke-width="0.9"/><circle cx="687.8" cy="495.9" r="1.45" fill="#8eeaf0"/><circle cx="736.4" cy="429" r="1.7" fill="#8fe05a"/><circle cx="775.8" cy="428.8" r="2.65" fill="#1c1c1c" stroke="#68bcc4" stroke-width="0.9"/><circle cx="775.8" cy="428.8" r="1.45" fill="#8eeaf0"/><circle cx="736.2" cy="480.1" r="2.65" fill="#1c1c1c" stroke="#68bcc4" stroke-width="0.9"/><circle cx="736.2" cy="480.1" r="1.45" fill="#8eeaf0"/><circle cx="736.2" cy="496.65" r="2.65" fill="#1c1c1c" stroke="#68bcc4" stroke-width="0.9"/><circle cx="736.2" cy="496.65" r="1.45" fill="#8eeaf0"/><circle cx="800.5" cy="480.1" r="2.65" fill="#1c1c1c" stroke="#68bcc4" stroke-width="0.9"/><circle cx="800.5" cy="480.1" r="1.45" fill="#8eeaf0"/><circle cx="839.8" cy="614.3" r="2.65" fill="#1c1c1c" stroke="#70b96c" stroke-width="0.9"/><circle cx="839.8" cy="614.3" r="1.45" fill="#98ee92"/><circle cx="839.8" cy="630.85" r="2.65" fill="#1c1c1c" stroke="#68bcc4" stroke-width="0.9"/><circle cx="839.8" cy="630.85" r="1.45" fill="#8eeaf0"/><circle cx="839.8" cy="647.4" r="2.65" fill="#1c1c1c" stroke="#68bcc4" stroke-width="0.9"/><circle cx="839.8" cy="647.4" r="1.45" fill="#8eeaf0"/><circle cx="960.6" cy="614.3" r="2.65" fill="#1c1c1c" stroke="#68bcc4" stroke-width="0.9"/><circle cx="960.6" cy="614.3" r="1.45" fill="#8eeaf0"/><circle cx="988.5" cy="614.3" r="2.65" fill="#1c1c1c" stroke="#68bcc4" stroke-width="0.9"/><circle cx="988.5" cy="614.3" r="1.45" fill="#8eeaf0"/><circle cx="523.9" cy="615.2" r="2.65" fill="#1c1c1c" stroke="#68bcc4" stroke-width="0.9"/><circle cx="523.9" cy="615.2" r="1.45" fill="#8eeaf0"/><circle cx="523.9" cy="631.75" r="2.65" fill="#1c1c1c" stroke="#68bcc4" stroke-width="0.9"/><circle cx="523.9" cy="631.75" r="1.45" fill="#8eeaf0"/><circle cx="589.3" cy="615.2" r="2.65" fill="#1c1c1c" stroke="#70b96c" stroke-width="0.9"/><circle cx="589.3" cy="615.2" r="1.45" fill="#98ee92"/><circle cx="616.3" cy="615.2" r="2.65" fill="#1c1c1c" stroke="#70b96c" stroke-width="0.9"/><circle cx="616.3" cy="615.2" r="1.45" fill="#98ee92"/><circle cx="737.3" cy="615.2" r="2.65" fill="#1c1c1c" stroke="#70b96c" stroke-width="0.9"/><circle cx="737.3" cy="615.2" r="1.45" fill="#98ee92"/><circle cx="325.1" cy="440.2" r="2.65" fill="#1c1c1c" stroke="#68bcc4" stroke-width="0.9"/><circle cx="325.1" cy="440.2" r="1.45" fill="#8eeaf0"/><circle cx="325.1" cy="456.75" r="2.65" fill="#1c1c1c" stroke="#68bcc4" stroke-width="0.9"/><circle cx="325.1" cy="456.75" r="1.45" fill="#8eeaf0"/><circle cx="445.9" cy="440.2" r="2.65" fill="#1c1c1c" stroke="#68bcc4" stroke-width="0.9"/><circle cx="445.9" cy="440.2" r="1.45" fill="#8eeaf0"/><circle cx="304.3" cy="714.2" r="2.65" fill="#1c1c1c" stroke="#68bcc4" stroke-width="0.9"/><circle cx="304.3" cy="714.2" r="1.45" fill="#8eeaf0"/><circle cx="304.3" cy="730.75" r="2.65" fill="#1c1c1c" stroke="#68bcc4" stroke-width="0.9"/><circle cx="304.3" cy="730.75" r="1.45" fill="#8eeaf0"/><circle cx="425.6" cy="714.2" r="2.65" fill="#1c1c1c" stroke="#68bcc4" stroke-width="0.9"/><circle cx="425.6" cy="714.2" r="1.45" fill="#8eeaf0"/><circle cx="68.9" cy="458.05" r="1.7" fill="#8fe05a"/><circle cx="122" cy="457.85" r="2.65" fill="#1c1c1c" stroke="#68bcc4" stroke-width="0.9"/><circle cx="122" cy="457.85" r="1.45" fill="#8eeaf0"/><circle cx="49.7" cy="514.8" r="2.65" fill="#1c1c1c" stroke="#68bcc4" stroke-width="0.9"/><circle cx="49.7" cy="531.35" r="2.65" fill="#1c1c1c" stroke="#68bcc4" stroke-width="0.9"/><circle cx="49.7" cy="531.35" r="1.45" fill="#8eeaf0"/><circle cx="127.4" cy="514.8" r="2.65" fill="#1c1c1c" stroke="#68bcc4" stroke-width="0.9"/><circle cx="127.4" cy="514.8" r="1.45" fill="#8eeaf0"/><circle cx="171.4" cy="488.8" r="2.65" fill="#1c1c1c" stroke="#68bcc4" stroke-width="0.9"/><circle cx="171.4" cy="488.8" r="1.45" fill="#8eeaf0"/><circle cx="171.4" cy="505.35" r="2.65" fill="#1c1c1c" stroke="#68bcc4" stroke-width="0.9"/><circle cx="171.4" cy="505.35" r="1.45" fill="#8eeaf0"/><circle cx="235.9" cy="488.8" r="2.65" fill="#1c1c1c" stroke="#68bcc4" stroke-width="0.9"/><circle cx="235.9" cy="488.8" r="1.45" fill="#8eeaf0"/><circle cx="265.7" cy="754.6" r="2.65" fill="#1c1c1c" stroke="#68bcc4" stroke-width="0.9"/><circle cx="265.7" cy="754.6" r="1.45" fill="#8eeaf0"/><circle cx="3.2" cy="806.7" r="2.65" fill="#1c1c1c" stroke="#68bcc4" stroke-width="0.9"/><circle cx="3.2" cy="806.7" r="1.45" fill="#8eeaf0"/><circle cx="505.4" cy="398.25" r="2.4" fill="#1c1c1c"/><circle cx="505.4" cy="398.25" r="1.6" fill="#8eeaf0"/><circle cx="604.4" cy="511.95" r="2.4" fill="#1c1c1c"/><circle cx="604.4" cy="511.95" r="1.6" fill="#8eeaf0"/><circle cx="30.9" cy="514.2" r="2.4" fill="#1c1c1c"/><circle cx="30.9" cy="514.2" r="1.6" fill="#8eeaf0"/><circle cx="264.8" cy="224.5" r="2.4" fill="#1c1c1c"/><circle cx="264.8" cy="224.5" r="1.6" fill="#98ee92"/><circle cx="264.8" cy="240.9" r="2.4" fill="#1c1c1c"/><circle cx="264.8" cy="240.9" r="1.6" fill="#98ee92"/></svg>
<svg class="b" style="left:0;top:0" width="1060" height="904" viewBox="0 0 1060 904"><path d="M266.3,224.3H272" stroke="#7fce7a" stroke-width="2" opacity="0.3" fill="none"/><path d="M272,224.3H280.6" stroke="#7fce7a" stroke-width="2" fill="none"/><path d="M266.3,240.85H272" stroke="#7fce7a" stroke-width="2" opacity="0.3" fill="none"/><path d="M272,240.85H280.6" stroke="#7fce7a" stroke-width="2" fill="none"/><path d="M376.6,224.4H382" stroke="#7fce7a" stroke-width="2" opacity="0.3" fill="none"/><path d="M410.4,303.8H405" stroke="#7fce7a" stroke-width="2" opacity="0.3" fill="none"/><path d="M482.7,303.8H488.1" stroke="#77d3dc" stroke-width="2" opacity="0.3" fill="none"/><path d="M520.9,415.15H515.5" stroke="#77d3dc" stroke-width="2" opacity="0.3" fill="none"/><path d="M506.9,398.6H511.8" stroke="#77d3dc" stroke-width="2" opacity="0.3" fill="none"/><path d="M511.8,398.6H520.9" stroke="#77d3dc" stroke-width="2" fill="none"/><path d="M591.5,398.6H596.9" stroke="#77d3dc" stroke-width="2" opacity="0.3" fill="none"/><path d="M620.1,495.9H614.7" stroke="#77d3dc" stroke-width="2" opacity="0.3" fill="none"/><path d="M605.9,512.45H611.1" stroke="#77d3dc" stroke-width="2" opacity="0.3" fill="none"/><path d="M611.1,512.45H620.1" stroke="#77d3dc" stroke-width="2" fill="none"/><path d="M690.7,495.9H696.1" stroke="#77d3dc" stroke-width="2" opacity="0.3" fill="none"/><path d="M733.3,496.65H727.9" stroke="#77d3dc" stroke-width="2" opacity="0.3" fill="none"/><path d="M803.4,480.1H808.8" stroke="#77d3dc" stroke-width="2" opacity="0.3" fill="none"/><path d="M836.9,630.85H831.5" stroke="#77d3dc" stroke-width="2" opacity="0.3" fill="none"/><path d="M836.9,647.4H831.5" stroke="#77d3dc" stroke-width="2" opacity="0.3" fill="none"/><path d="M740.2,615.2H745.6" stroke="#7fce7a" stroke-width="1.5" opacity="0.3" fill="none"/><path d="M836.9,614.3H831.5" stroke="#7fce7a" stroke-width="1.5" opacity="0.3" fill="none"/><path d="M592.2,615.2H597.6" stroke="#7fce7a" stroke-width="1.5" opacity="0.3" fill="none"/><path d="M613.4,615.2H608" stroke="#7fce7a" stroke-width="1.5" opacity="0.3" fill="none"/><path d="M963.5,614.3H968.9" stroke="#77d3dc" stroke-width="1.5" opacity="0.3" fill="none"/><path d="M985.6,614.3H980.2" stroke="#77d3dc" stroke-width="1.5" opacity="0.3" fill="none"/><path d="M448.8,440.2H454.2" stroke="#77d3dc" stroke-width="2" opacity="0.3" fill="none"/><path d="M521,615.2H515.6" stroke="#77d3dc" stroke-width="2" opacity="0.3" fill="none"/><path d="M428.5,714.2H433.9" stroke="#77d3dc" stroke-width="2" opacity="0.3" fill="none"/><path d="M521,631.75H515.6" stroke="#77d3dc" stroke-width="2" opacity="0.3" fill="none"/><path d="M322.2,440.2H316.8" stroke="#77d3dc" stroke-width="2" opacity="0.3" fill="none"/><path d="M238.8,488.8H244.2" stroke="#77d3dc" stroke-width="2" opacity="0.3" fill="none"/><path d="M322.2,456.75H316.8" stroke="#77d3dc" stroke-width="2" opacity="0.3" fill="none"/><path d="M168.5,488.8H163.1" stroke="#77d3dc" stroke-width="2" opacity="0.3" fill="none"/><path d="M130.3,514.8H135.7" stroke="#77d3dc" stroke-width="2" opacity="0.3" fill="none"/><path d="M168.5,505.35H163.1" stroke="#77d3dc" stroke-width="2" opacity="0.3" fill="none"/><path d="M32.4,514.8H37.9" stroke="#77d3dc" stroke-width="2" opacity="0.3" fill="none"/><path d="M37.9,514.8H46.8" stroke="#77d3dc" stroke-width="2" fill="none"/><path d="M46.8,531.35H41.4" stroke="#77d3dc" stroke-width="2" opacity="0.3" fill="none"/><path d="M268.6,754.6H274" stroke="#77d3dc" stroke-width="2" opacity="0.3" fill="none"/><path d="M301.4,730.75H296" stroke="#77d3dc" stroke-width="2" opacity="0.3" fill="none"/><path d="M301.4,714.2H296" stroke="#77d3dc" stroke-width="2" opacity="0.3" fill="none"/><path d="M340.8,187.4 L275.2,247.3" stroke="#4b7c84" stroke-width="1.1" fill="none"/><path d="M275.2,257.5 H280.7" stroke="#77d3dc" stroke-width="2" opacity="0.3" fill="none"/><path d="M774.2,443.1 L727.9,473.0" stroke="#4b7c84" stroke-width="1.1" fill="none"/><path d="M727.9,480.0 L733,480.3" stroke="#77d3dc" stroke-width="2" opacity="0.3" fill="none"/></svg>
<div class="b" style="left:-4px;top:39px;width:246.1px;height:241.7px;background:#323232;border-radius:5px;"></div>
<div class="b" style="left:-4px;top:39px;width:246.1px;height:33.5px;background:#404040;border-radius:5px 5px 0 0;"></div>
<div class="t" style="left:9.8px;top:48.53px;font-size:13.2px;color:#c4c4c4;letter-spacing:0.23px;">Main Preview</div>
<svg class="b" style="left:8px;top:72px" width="226" height="207" viewBox="0 0 226 207"><defs><clipPath id="hc2"><rect x="0" y="0.5" width="226" height="206.5"/></clipPath></defs><g clip-path="url(#hc2)"><rect x="0" y="0" width="226" height="207" fill="#000"/><g fill="#fff" transform="translate(0,-9.4)"><circle cx="0.31" cy="13.66" r="10.02"/><circle cx="28.59" cy="13.62" r="10.9"/><circle cx="56.87" cy="13.57" r="11.79"/><circle cx="85.15" cy="13.53" r="12.68"/><polygon points="126.96,14.12 126.84,15.34 126.62,16.53 126.3,17.69 125.88,18.81 125.36,19.89 124.75,20.91 124.06,21.87 123.29,22.76 122.46,23.58 121.56,24.32 120.6,24.98 119.6,25.55 118.55,26.03 117.48,26.42 116.37,26.72 115.26,26.92 114.13,27.03 113,27.04 111.88,26.96 110.77,26.79 109.68,26.52 108.62,26.17 107.59,25.73 106.6,25.21 105.66,24.61 104.77,23.93 103.94,23.19 103.17,22.37 102.48,21.49 101.85,20.56 101.31,19.58 100.85,18.55 100.47,17.48 100.18,16.38 99.99,15.26 99.89,14.13 99.89,12.98 99.98,11.83 100.17,10.69 100.46,9.56 100.85,8.46 101.33,7.39 101.91,6.36 102.58,5.38 103.33,4.46 104.17,3.6 105.08,2.82 106.07,2.12 107.11,1.5 108.22,0.98 109.37,0.56 110.55,0.25 111.77,0.04 113,-0.06 114.24,-0.04 115.48,0.09 116.7,0.33 117.89,0.69 119.05,1.15 120.16,1.72 121.22,2.39 122.21,3.15 123.12,4.01 123.95,4.94 124.69,5.94 125.33,7.01 125.87,8.12 126.31,9.28 126.64,10.47 126.85,11.68 126.96,12.9"/><polygon points="155.57,14.12 155.57,15.38 155.57,16.65 155.42,17.92 154.97,19.12 154.42,20.27 153.77,21.35 153.04,22.38 152.22,23.33 151.33,24.2 150.37,24.99 149.35,25.69 148.28,26.3 147.17,26.81 146.02,27.23 144.84,27.54 143.65,27.76 142.45,27.87 141.25,27.89 140.05,27.8 138.87,27.62 137.71,27.34 136.58,26.96 135.48,26.49 134.43,25.94 133.43,25.3 132.48,24.57 131.6,23.78 130.78,22.91 130.04,21.98 129.37,20.98 128.79,19.93 128.3,18.84 127.9,17.7 127.6,16.53 127.39,15.34 127.28,14.13 127.28,12.9 127.38,11.68 127.58,10.46 127.89,9.26 128.31,8.09 128.82,6.95 129.44,5.85 130.15,4.81 130.95,3.83 131.84,2.91 132.82,2.08 133.86,1.33 134.98,0.68 136.15,0.12 137.41,-0.2 138.72,-0.2 140,-0.2 141.25,-0.2 142.5,-0.2 143.78,-0.2 145.09,-0.2 146.46,-0.19 147.7,0.3 148.88,0.91 150,1.62 151.06,2.44 152.03,3.34 152.91,4.34 153.7,5.41 154.39,6.54 154.96,7.73 155.43,8.96 155.57,10.29 155.57,11.6 155.57,12.87"/><polygon points="183.82,14.12 183.82,15.38 183.82,16.65 183.82,17.96 183.82,19.34 183.48,20.64 182.79,21.8 182.01,22.88 181.14,23.89 180.19,24.82 179.18,25.66 178.09,26.4 176.96,27.04 175.78,27.59 174.56,28.03 173.32,28.36 172.03,28.45 170.75,28.45 169.5,28.45 168.25,28.45 166.98,28.44 165.74,28.15 164.54,27.75 163.38,27.25 162.26,26.66 161.2,25.98 160.19,25.22 159.25,24.37 158.39,23.45 157.6,22.46 156.9,21.4 156.28,20.29 155.76,19.13 155.33,17.92 155.18,16.65 155.18,15.38 155.18,14.13 155.18,12.87 155.18,11.6 155.18,10.29 155.32,8.97 155.76,7.72 156.31,6.51 156.96,5.35 157.72,4.24 158.57,3.2 159.52,2.23 160.55,1.34 161.66,0.55 162.84,-0.15 164.29,-0.2 165.66,-0.2 166.97,-0.2 168.25,-0.2 169.5,-0.2 170.75,-0.2 172.03,-0.2 173.34,-0.2 174.71,-0.2 176.18,-0.2 177.6,0.1 178.79,0.86 179.91,1.72 180.94,2.68 181.88,3.74 182.72,4.87 183.44,6.07 183.82,7.45 183.82,8.91 183.82,10.29 183.82,11.6 183.82,12.87"/><polygon points="212.07,14.12 212.07,15.38 212.07,16.65 212.07,17.96 212.07,19.34 212.07,20.8 211.81,22.24 210.98,23.39 210.06,24.46 209.06,25.44 207.98,26.32 206.84,27.11 205.64,27.79 204.39,28.37 202.96,28.45 201.59,28.45 200.28,28.45 199,28.45 197.75,28.45 196.5,28.45 195.22,28.45 193.91,28.45 192.54,28.45 191.28,28.01 190.09,27.39 188.97,26.67 187.91,25.86 186.91,24.96 186,23.99 185.16,22.94 184.42,21.82 183.77,20.65 183.43,19.34 183.43,17.96 183.43,16.65 183.43,15.38 183.43,14.13 183.43,12.87 183.43,11.6 183.43,10.29 183.43,8.91 183.43,7.45 183.8,6.07 184.49,4.84 185.29,3.67 186.19,2.56 187.19,1.54 188.28,0.6 189.48,-0.2 191.07,-0.2 192.54,-0.2 193.91,-0.2 195.22,-0.2 196.5,-0.2 197.75,-0.2 199,-0.2 200.28,-0.2 201.59,-0.2 202.96,-0.2 204.43,-0.2 206.02,-0.2 207.58,0.09 208.76,1 209.85,2.02 210.85,3.14 211.73,4.34 212.07,5.85 212.07,7.45 212.07,8.91 212.07,10.29 212.07,11.6 212.07,12.87"/><polygon points="240.32,14.12 240.32,15.38 240.32,16.65 240.32,17.96 240.32,19.34 240.32,20.8 240.32,22.4 239.96,23.9 238.99,25.02 237.93,26.06 236.79,26.99 235.59,27.82 234.27,28.45 232.68,28.45 231.21,28.45 229.84,28.45 228.53,28.45 227.25,28.45 226,28.45 224.75,28.45 223.47,28.45 222.16,28.45 220.79,28.45 219.32,28.45 217.92,28.11 216.74,27.35 215.62,26.5 214.57,25.56 213.6,24.53 212.72,23.42 211.94,22.24 211.68,20.8 211.68,19.34 211.68,17.96 211.68,16.65 211.68,15.38 211.68,14.13 211.68,12.87 211.68,11.6 211.68,10.29 211.68,8.91 211.68,7.45 211.68,5.85 212.01,4.33 212.85,3.09 213.81,1.93 214.86,0.85 216.01,-0.14 217.73,-0.2 219.32,-0.2 220.79,-0.2 222.16,-0.2 223.47,-0.2 224.75,-0.2 226,-0.2 227.25,-0.2 228.53,-0.2 229.84,-0.2 231.21,-0.2 232.68,-0.2 234.27,-0.2 236.03,-0.2 237.61,0.28 238.77,1.36 239.81,2.54 240.32,4.09 240.32,5.85 240.32,7.45 240.32,8.91 240.32,10.29 240.32,11.6 240.32,12.87"/><circle cx="14.41" cy="41.95" r="9.13"/><circle cx="42.69" cy="41.91" r="10.02"/><circle cx="70.97" cy="41.87" r="10.91"/><circle cx="99.24" cy="41.82" r="11.8"/><circle cx="127.52" cy="41.78" r="12.68"/><polygon points="169.34,42.38 169.22,43.59 169,44.78 168.68,45.94 168.26,47.06 167.74,48.14 167.13,49.16 166.44,50.12 165.67,51.02 164.84,51.84 163.94,52.58 162.98,53.23 161.97,53.8 160.93,54.29 159.85,54.68 158.75,54.97 157.63,55.18 156.5,55.28 155.38,55.3 154.25,55.22 153.14,55.04 152.05,54.78 150.99,54.43 149.96,53.99 148.97,53.47 148.03,52.86 147.14,52.19 146.31,51.44 145.54,50.62 144.85,49.75 144.22,48.81 143.68,47.83 143.22,46.8 142.84,45.73 142.55,44.64 142.36,43.51 142.26,42.38 142.26,41.23 142.35,40.08 142.54,38.94 142.83,37.81 143.22,36.71 143.7,35.64 144.28,34.61 144.95,33.63 145.71,32.71 146.54,31.85 147.46,31.07 148.44,30.36 149.49,29.75 150.59,29.23 151.74,28.81 152.93,28.49 154.14,28.28 155.38,28.19 156.61,28.2 157.85,28.33 159.07,28.58 160.27,28.93 161.43,29.39 162.54,29.96 163.6,30.63 164.58,31.4 165.5,32.25 166.33,33.18 167.07,34.19 167.71,35.25 168.25,36.37 168.69,37.53 169.02,38.72 169.24,39.93 169.34,41.15"/><polygon points="197.95,42.38 197.95,43.63 197.95,44.9 197.8,46.17 197.35,47.37 196.8,48.52 196.15,49.61 195.42,50.63 194.6,51.58 193.7,52.45 192.74,53.24 191.73,53.94 190.66,54.55 189.54,55.07 188.4,55.48 187.22,55.8 186.03,56.01 184.83,56.13 183.62,56.14 182.43,56.06 181.25,55.87 180.08,55.59 178.95,55.21 177.86,54.75 176.8,54.19 175.8,53.55 174.85,52.83 173.97,52.03 173.15,51.16 172.41,50.23 171.75,49.23 171.16,48.19 170.67,47.09 170.27,45.95 169.97,44.78 169.76,43.59 169.65,42.38 169.65,41.15 169.75,39.93 169.95,38.71 170.26,37.51 170.68,36.34 171.19,35.2 171.81,34.1 172.52,33.06 173.32,32.07 174.21,31.16 175.19,30.33 176.24,29.58 177.35,28.92 178.53,28.37 179.79,28.05 181.1,28.05 182.37,28.05 183.62,28.05 184.88,28.05 186.15,28.05 187.46,28.05 188.84,28.05 190.07,28.55 191.26,29.15 192.38,29.87 193.44,30.68 194.41,31.59 195.29,32.58 196.08,33.65 196.77,34.79 197.35,35.98 197.81,37.21 197.95,38.54 197.95,39.85 197.95,41.12"/><polygon points="226.2,42.38 226.2,43.63 226.2,44.9 226.2,46.21 226.2,47.59 225.86,48.89 225.17,50.05 224.39,51.14 223.52,52.15 222.57,53.07 221.55,53.91 220.47,54.65 219.34,55.3 218.16,55.84 216.94,56.28 215.69,56.62 214.4,56.7 213.13,56.7 211.88,56.7 210.62,56.7 209.35,56.7 208.12,56.4 206.92,56 205.75,55.51 204.63,54.92 203.57,54.24 202.56,53.47 201.63,52.62 200.76,51.7 199.97,50.71 199.27,49.65 198.65,48.54 198.13,47.38 197.7,46.17 197.55,44.9 197.55,43.63 197.55,42.38 197.55,41.12 197.55,39.85 197.55,38.54 197.69,37.21 198.13,35.97 198.68,34.76 199.33,33.59 200.09,32.48 200.94,31.44 201.89,30.47 202.92,29.59 204.03,28.79 205.22,28.1 206.66,28.05 208.04,28.05 209.35,28.05 210.62,28.05 211.88,28.05 213.13,28.05 214.4,28.05 215.71,28.05 217.09,28.05 218.55,28.05 219.98,28.34 221.17,29.1 222.29,29.97 223.32,30.93 224.26,31.98 225.1,33.12 225.82,34.32 226.2,35.7 226.2,37.16 226.2,38.54 226.2,39.85 226.2,41.12"/><circle cx="0.23" cy="70.28" r="7.37"/><circle cx="28.51" cy="70.24" r="8.25"/><circle cx="56.79" cy="70.2" r="9.14"/><circle cx="85.06" cy="70.16" r="10.03"/><circle cx="113.34" cy="70.11" r="10.91"/><circle cx="141.62" cy="70.07" r="11.8"/><circle cx="169.9" cy="70.03" r="12.69"/><polygon points="211.72,70.62 211.61,71.84 211.39,73.03 211.06,74.19 210.64,75.32 210.12,76.39 209.51,77.42 208.82,78.38 208.05,79.27 207.21,80.09 206.31,80.83 205.36,81.49 204.35,82.06 203.31,82.54 202.23,82.93 201.13,83.23 200.01,83.43 198.88,83.54 197.75,83.55 196.63,83.47 195.52,83.3 194.42,83.03 193.36,82.68 192.33,82.24 191.34,81.72 190.4,81.12 189.51,80.44 188.68,79.69 187.92,78.88 187.22,78 186.59,77.07 186.05,76.08 185.59,75.05 185.21,73.99 184.92,72.89 184.73,71.76 184.63,70.62 184.63,69.48 184.72,68.33 184.91,67.19 185.2,66.06 185.59,64.96 186.07,63.88 186.65,62.85 187.32,61.87 188.08,60.95 188.91,60.09 189.83,59.31 190.81,58.61 191.86,57.99 192.96,57.47 194.11,57.05 195.3,56.74 196.52,56.53 197.75,56.43 198.99,56.45 200.23,56.58 201.45,56.82 202.65,57.17 203.81,57.64 204.92,58.21 205.97,58.88 206.96,59.65 207.88,60.5 208.71,61.43 209.45,62.43 210.09,63.5 210.63,64.62 211.07,65.78 211.4,66.97 211.62,68.18 211.72,69.4"/><polygon points="240.32,70.62 240.32,71.88 240.32,73.15 240.18,74.42 239.73,75.62 239.18,76.77 238.53,77.86 237.79,78.88 236.98,79.84 236.08,80.71 235.12,81.5 234.1,82.2 233.03,82.81 231.92,83.32 230.77,83.74 229.6,84.05 228.41,84.27 227.2,84.38 226,84.4 224.8,84.31 223.62,84.13 222.46,83.85 221.32,83.47 220.23,83 219.18,82.45 218.17,81.8 217.22,81.08 216.34,80.29 215.52,79.42 214.78,78.48 214.12,77.49 213.53,76.44 213.04,75.34 212.64,74.2 212.34,73.03 212.13,71.84 212.02,70.62 212.02,69.4 212.12,68.18 212.32,66.96 212.63,65.76 213.05,64.58 213.56,63.44 214.18,62.35 214.89,61.3 215.69,60.32 216.59,59.41 217.56,58.57 218.61,57.82 219.72,57.17 220.9,56.61 222.16,56.3 223.47,56.3 224.75,56.3 226,56.3 227.25,56.3 228.53,56.3 229.84,56.3 231.21,56.3 232.45,56.79 233.64,57.4 234.76,58.11 235.82,58.93 236.79,59.84 237.67,60.83 238.46,61.9 239.15,63.03 239.73,64.22 240.19,65.46 240.32,66.79 240.32,68.1 240.32,69.37"/><circle cx="14.33" cy="98.57" r="6.49"/><circle cx="42.61" cy="98.53" r="7.37"/><circle cx="70.88" cy="98.49" r="8.26"/><circle cx="99.16" cy="98.45" r="9.15"/><circle cx="127.44" cy="98.41" r="10.03"/><circle cx="155.72" cy="98.36" r="10.92"/><circle cx="183.99" cy="98.32" r="11.81"/><circle cx="212.27" cy="98.28" r="12.69"/><circle cx="0.15" cy="126.9" r="4.72"/><circle cx="28.43" cy="126.86" r="5.6"/><circle cx="56.7" cy="126.82" r="6.49"/><circle cx="84.98" cy="126.78" r="7.38"/><circle cx="113.26" cy="126.74" r="8.26"/><circle cx="141.54" cy="126.7" r="9.15"/><circle cx="169.81" cy="126.66" r="10.04"/><circle cx="198.09" cy="126.61" r="10.93"/><circle cx="226.37" cy="126.57" r="11.81"/><circle cx="14.25" cy="155.2" r="3.84"/><circle cx="42.52" cy="155.15" r="4.72"/><circle cx="70.8" cy="155.11" r="5.61"/><circle cx="99.08" cy="155.07" r="6.5"/><circle cx="127.36" cy="155.03" r="7.38"/><circle cx="155.63" cy="154.99" r="8.27"/><circle cx="183.91" cy="154.95" r="9.16"/><circle cx="212.19" cy="154.91" r="10.04"/><circle cx="0.06" cy="183.53" r="2.07"/><circle cx="28.34" cy="183.49" r="2.95"/><circle cx="56.62" cy="183.45" r="3.84"/><circle cx="84.9" cy="183.4" r="4.73"/><circle cx="113.18" cy="183.36" r="5.62"/><circle cx="141.45" cy="183.32" r="6.5"/><circle cx="169.73" cy="183.28" r="7.39"/><circle cx="198.01" cy="183.24" r="8.28"/><circle cx="226.29" cy="183.2" r="9.16"/><circle cx="14.16" cy="211.82" r="1.19"/><circle cx="42.44" cy="211.78" r="2.07"/><circle cx="70.72" cy="211.74" r="2.96"/><circle cx="99" cy="211.7" r="3.85"/><circle cx="127.27" cy="211.65" r="4.73"/><circle cx="155.55" cy="211.61" r="5.62"/><circle cx="183.83" cy="211.57" r="6.51"/><circle cx="212.11" cy="211.53" r="7.4"/></g></g></svg>
<div class="b" style="left:233.3px;top:278.2px;width:8.8px;height:2.4px;background:#585858;"></div>
<div class="b" style="left:5.8px;top:557.8px;width:234.4px;height:333px;background:#2c2c2c;border-radius:5px;"></div>
<div class="b" style="left:5.8px;top:557.8px;width:234.4px;height:53.4px;background:#393939;border-radius:5px 5px 0 0;"></div>
<div class="t" style="left:12.3px;top:565.69px;font-size:13.6px;color:#c8c8c8;letter-spacing:0.08px;">Dots</div>
<div class="t" style="left:12.3px;top:588.23px;font-size:10.6px;color:#5c5c5c;letter-spacing:0.15px;">Patterns/Simple</div>
<svg class="b" style="left:218.5px;top:588px" width="10" height="10" viewBox="0 0 10 10"><path d="M5,0.6V9.4M0.6,5H9.4" stroke="#fff" stroke-width="1.2"/></svg>
<div class="b" style="left:14.6px;top:617.3px;width:49.6px;height:20px;border-radius:10px;background:#1d1d1d"></div>
<div class="b" style="left:15.7px;top:618.4px;width:47.4px;height:17.8px;border-radius:8.9px;background:#474747"></div>
<div class="b" style="left:24.2px;top:625.2px;width:4.2px;height:4.2px;border-radius:50%;background:#8fe05a"></div>
<div class="t" style="left:33.2px;top:621.44px;font-size:12px;color:#c8c8c8;letter-spacing:-0.46px;">Size</div>
<div class="t" style="left:201.34px;top:622.19px;font-size:11px;color:#787878;">Float</div>
<div class="b" style="left:14.6px;top:643.5px;width:55.6px;height:20px;border-radius:10px;background:#1d1d1d"></div>
<div class="b" style="left:15.7px;top:644.6px;width:53.4px;height:17.8px;border-radius:8.9px;background:#474747"></div>
<div class="b" style="left:24.2px;top:651.4px;width:4.2px;height:4.2px;border-radius:50%;background:#8fe05a"></div>
<div class="t" style="left:33.2px;top:647.64px;font-size:12px;color:#c8c8c8;letter-spacing:-0.12px;">Tiling</div>
<div class="t" style="left:188.5px;top:648.39px;font-size:11px;color:#787878;">Vector2</div>
<div class="b" style="left:14.6px;top:669.7px;width:70.5px;height:20px;border-radius:10px;background:#1d1d1d"></div>
<div class="b" style="left:15.7px;top:670.8px;width:68.3px;height:17.8px;border-radius:8.9px;background:#474747"></div>
<div class="b" style="left:24.2px;top:677.6px;width:4.2px;height:4.2px;border-radius:50%;background:#8fe05a"></div>
<div class="t" style="left:33.2px;top:673.84px;font-size:12px;color:#c8c8c8;letter-spacing:-0.09px;">Offset X</div>
<div class="t" style="left:201.34px;top:674.59px;font-size:11px;color:#787878;">Float</div>
<div class="b" style="left:14.6px;top:695.9px;width:71px;height:20px;border-radius:10px;background:#1d1d1d"></div>
<div class="b" style="left:15.7px;top:697px;width:68.8px;height:17.8px;border-radius:8.9px;background:#474747"></div>
<div class="b" style="left:24.2px;top:703.8px;width:4.2px;height:4.2px;border-radius:50%;background:#8fe05a"></div>
<div class="t" style="left:33.2px;top:700.04px;font-size:12px;color:#c8c8c8;letter-spacing:0px;">Offset Y</div>
<div class="t" style="left:201.34px;top:700.79px;font-size:11px;color:#787878;">Float</div>
<div class="b" style="left:14.6px;top:722.1px;width:71.7px;height:20px;border-radius:10px;background:#1d1d1d"></div>
<div class="b" style="left:15.7px;top:723.2px;width:69.5px;height:17.8px;border-radius:8.9px;background:#474747"></div>
<div class="b" style="left:24.2px;top:730px;width:4.2px;height:4.2px;border-radius:50%;background:#8fe05a"></div>
<div class="t" style="left:33.2px;top:726.24px;font-size:12px;color:#c8c8c8;letter-spacing:-0.14px;">Rotation</div>
<div class="t" style="left:201.34px;top:726.99px;font-size:11px;color:#787878;">Float</div>
<div class="b" style="left:789.9px;top:44.5px;width:264px;height:258.9px;background:#2d2d2d;border-radius:5px;"></div>
<div class="b" style="left:789.9px;top:44.5px;width:264px;height:47.8px;background:#383838;border-radius:5px 5px 0 0;"></div>
<div class="t" style="left:799.4px;top:55.03px;font-size:13.2px;color:#c4c4c4;letter-spacing:0.32px;">Graph Inspector</div>
<div class="b" style="left:789.9px;top:92.3px;width:264px;height:18.5px;background:#252525;"></div>
<div class="b" style="left:789.9px;top:92.3px;width:94.6px;height:18.5px;background:#2d2d2d;"></div>
<div class="b" style="left:789.9px;top:92.3px;width:94.6px;height:1.6px;background:#3f7fc4;"></div>
<div class="t" style="left:799.4px;top:95.84px;font-size:12px;color:#d0d0d0;letter-spacing:0.02px;">Node Settings</div>
<div class="t" style="left:894.4px;top:95.84px;font-size:12px;color:#c4c4c4;letter-spacing:-0.09px;">Graph Settings</div>
<div class="b" style="left:796.4px;top:118.3px;width:251.5px;height:155px;border:1px solid #414141;border-radius:4px;background:#2c2c2c"></div>
<div class="b" style="left:797.4px;top:119.3px;width:249.5px;height:22px;background:#363636;border-radius:3px"></div>
<div class="t" style="left:801px;top:125.95px;font-size:14px;color:#b2b2b2;letter-spacing:0.04px;font-weight:bold;">Property: Rotation</div>
<div class="t" style="left:806.3px;top:157.14px;font-size:12px;color:#c4c4c4;letter-spacing:-0.25px;">Name</div>
<div class="b" style="left:918.3px;top:155.6px;width:112.7px;height:16.6px;background:#2a2a2a;border:1px solid #191919;border-radius:3px"></div>
<div class="t" style="left:921px;top:158.44px;font-size:12px;color:#d6d6d6;letter-spacing:0.08px;">Rotation</div>
<div class="t" style="left:806.3px;top:175.84px;font-size:12px;color:#c4c4c4;letter-spacing:0px;">Default</div>
<div class="t" style="left:921.6px;top:177.04px;font-size:12px;color:#d6d6d6;">X</div>
<div class="b" style="left:934.7px;top:174.3px;width:93.8px;height:16.8px;background:#2a2a2a;border:1px solid #191919;border-radius:3px"></div>
<div class="t" style="left:938px;top:177.14px;font-size:12px;color:#d6d6d6;letter-spacing:0.43px;">-0.59</div>
<div class="t" style="left:806.3px;top:194.54px;font-size:12px;color:#c4c4c4;letter-spacing:-0.1px;">Precision</div>
<div class="b" style="left:918.3px;top:193.7px;width:112.7px;height:16.4px;background:#515151;border:1px solid #303030;border-radius:3px"></div>
<div class="t" style="left:921.6px;top:195.74px;font-size:12px;color:#e4e4e4;letter-spacing:-0.21px;font-weight:bold;">Inherit</div>
<svg class="b" style="left:1018px;top:199px" width="8" height="6" viewBox="0 0 8 6"><path d="M0.5,0.7 L7.5,0.7 L4,5Z" fill="#d8d8d8"/></svg>
<div class="t" style="left:806.3px;top:213.24px;font-size:12px;color:#c4c4c4;letter-spacing:0.02px;">Override Property</div>
<div class="t" style="left:806.3px;top:226.54px;font-size:12px;color:#c4c4c4;letter-spacing:-0.02px;">Declaration</div>
<div class="b" style="left:918.3px;top:219.2px;width:12.6px;height:13.4px;background:#2a2a2a;border:1px solid #1d1d1d;border-radius:2px"></div>
<div class="t" style="left:806.3px;top:243.64px;font-size:12px;color:#c4c4c4;letter-spacing:-0.1px;">Use Custom</div>
<div class="t" style="left:806.3px;top:257.14px;font-size:12px;color:#c4c4c4;letter-spacing:-0.08px;">Binding</div>
<div class="b" style="left:918.3px;top:250px;width:12.6px;height:12.6px;background:#2a2a2a;border:1px solid #1d1d1d;border-radius:2px"></div>
<div class="b" style="left:0px;top:0px;width:1060px;height:17px;background:#282828;"></div>
<div class="b" style="left:0px;top:0px;width:1060px;height:1.3px;background:#1f1f1f;"></div>
<div class="b" style="left:0px;top:17px;width:1060px;height:1px;background:#222222;"></div>
<div class="b" style="left:268.9px;top:1.3px;width:62.3px;height:16.7px;background:#3c3c3c;border-radius:2px 2px 0 0"></div>
<div class="b" style="left:268.9px;top:1.3px;width:62.3px;height:1.2px;background:#2e6096;"></div>
<svg class="b" style="left:5.6px;top:2.3px" width="12" height="15" viewBox="0 0 12 15"><rect x="5" y="0" width="2" height="2.4" fill="#c4c4c4"/><rect x="1" y="2.2" width="10" height="9.8" rx="1" fill="#c4c4c4"/><rect x="4.2" y="6" width="2.2" height="2.2" fill="#282828"/><path d="M5.8,6.6 L8.2,4.2 M6.6,4 h1.8 v1.8" stroke="#282828" stroke-width="0.9" fill="none"/><rect x="5.3" y="12" width="1.4" height="2.6" fill="#c4c4c4"/></svg>
<div class="t" style="left:22.2px;top:4.34px;font-size:12px;color:#c4c4c4;letter-spacing:-0.15px;">Texture Less UI</div>
<svg class="b" style="left:127.6px;top:2.3px" width="12" height="15" viewBox="0 0 12 15"><rect x="5" y="0" width="2" height="2.4" fill="#c4c4c4"/><rect x="1" y="2.2" width="10" height="9.8" rx="1" fill="#c4c4c4"/><rect x="4.2" y="6" width="2.2" height="2.2" fill="#282828"/><path d="M5.8,6.6 L8.2,4.2 M6.6,4 h1.8 v1.8" stroke="#282828" stroke-width="0.9" fill="none"/><rect x="5.3" y="12" width="1.4" height="2.6" fill="#c4c4c4"/></svg>
<div class="t" style="left:143.9px;top:4.34px;font-size:12px;color:#c4c4c4;letter-spacing:-0.08px;">Texture Less UI - Bg</div>
<svg class="b" style="left:275px;top:2.2px" width="13" height="14" viewBox="0 0 13 14"><rect x="3.4" y="0" width="6.2" height="5.2" fill="#c4c4c4"/><rect x="5.6" y="1.4" width="1.8" height="1.8" fill="#3c3c3c"/><path d="M6.5,5.2V7.2M2.6,9V7.2H10.4V9" stroke="#9a9a9a" stroke-width="1" fill="none"/><rect x="0" y="8.6" width="5.4" height="5" fill="#8a8a8a"/><rect x="7.6" y="8.6" width="5.4" height="5" fill="#8a8a8a"/></svg>
<div class="t" style="left:291.6px;top:4.34px;font-size:12px;color:#d2d2d2;letter-spacing:-0.22px;">Dots</div>
<svg class="b" style="left:1046px;top:4px" width="4" height="11" viewBox="0 0 4 11"><circle cx="2" cy="1.6" r="1.05" fill="#d0d0d0"/><circle cx="2" cy="5.4" r="1.05" fill="#d0d0d0"/><circle cx="2" cy="9.2" r="1.05" fill="#d0d0d0"/></svg>
<div class="b" style="left:0px;top:18px;width:1060px;height:19px;background:#3c3c3c;"></div>
<div class="b" style="left:0px;top:37px;width:1060px;height:0.6px;background:#1c1c1c;"></div>
<svg class="b" style="left:6.9px;top:22.5px" width="9.6" height="9.8" viewBox="0 0 9.6 9.8"><path d="M0.8,0H7.2L9.6,2.4V9Q9.6,9.8 8.8,9.8H0.8Q0,9.8 0,9V0.8Q0,0 0.8,0Z" fill="#8c8c8c"/><rect x="2.2" y="0.5" width="4.8" height="2.6" fill="#555"/><rect x="4.9" y="0.8" width="1.3" height="1.9" fill="#9c9c9c"/><rect x="1.6" y="5.4" width="6.4" height="3.4" fill="#b4b4b4"/><rect x="1.6" y="6.8" width="6.4" height="0.7" fill="#8c8c8c"/></svg>
<div class="b" style="left:22.9px;top:18px;width:1.7px;height:19px;background:#303030;"></div>
<svg class="b" style="left:31px;top:25.6px" width="7" height="5" viewBox="0 0 7 5"><path d="M0.3,0.5 L6.7,0.5 L3.5,4.3Z" fill="#c4c4c4"/></svg>
<div class="b" style="left:43.9px;top:18px;width:1px;height:19px;background:#2c2c2c;"></div>
<div class="t" style="left:761.4px;top:22.84px;font-size:12px;color:#c4c4c4;letter-spacing:-0.06px;">Color Mode</div>
<div class="b" style="left:831px;top:21px;width:91.6px;height:15.4px;background:#515151;border:1px solid #353535;border-radius:3px"></div>
<div class="t" style="left:834.6px;top:23.04px;font-size:12px;color:#e0e0e0;letter-spacing:-0.2px;">&lt;None&gt;</div>
<svg class="b" style="left:910px;top:26.2px" width="8" height="6" viewBox="0 0 8 6"><path d="M0.6,0.7 L7.4,0.7 L4,4.8Z" fill="#d8d8d8"/></svg>
<div class="b" style="left:929.8px;top:18px;width:23.9px;height:19px;background:#505050;"></div>
<div class="b" style="left:960px;top:18px;width:24px;height:19px;background:#505050;"></div>
<div class="b" style="left:990px;top:18px;width:24px;height:19px;background:#505050;"></div>
<div class="b" style="left:955.2px;top:18px;width:3.6px;height:19px;background:#333;"></div>
<div class="b" style="left:985.2px;top:18px;width:3.6px;height:19px;background:#333;"></div>
<div class="b" style="left:1014.1px;top:18px;width:1px;height:19px;background:#303030;"></div>
<div class="b" style="left:1038.3px;top:18px;width:1px;height:19px;background:#303030;"></div>
<svg class="b" style="left:933.8px;top:22.7px" width="16" height="10" viewBox="0 0 16 10"><path d="M3.6,1.2 L0.9,5 L3.6,8.8 M12.4,1.2 L15.1,5 L12.4,8.8 M6.1,3.1 L9.9,6.9 M9.9,3.1 L6.1,6.9" stroke="#d6d6d6" stroke-width="1.2" fill="none"/></svg>
<svg class="b" style="left:966.8px;top:22.6px" width="10" height="10" viewBox="0 0 10 10"><circle cx="5" cy="5" r="4.9" fill="#d6d6d6"/><rect x="4.15" y="4.1" width="1.7" height="3.8" fill="#505050"/><circle cx="5" cy="2.6" r="1" fill="#505050"/></svg>
<svg class="b" style="left:996px;top:21.3px" width="12" height="12" viewBox="0 0 12 12"><circle cx="6" cy="6" r="5.9" fill="#d6d6d6"/><path d="M0.2,6.2 Q6,7.6 11.8,6.2 V7.4 Q6,8.8 0.2,7.4Z" fill="#505050"/></svg>
<svg class="b" style="left:1021.6px;top:22.8px" width="9.6" height="9.6" viewBox="0 0 10 10"><circle cx="5" cy="5" r="4.9" fill="#d6d6d6"/><path d="M3.5,3.9 Q3.5,2.3 5,2.3 Q6.6,2.3 6.6,3.7 Q6.6,4.6 5.6,5 Q5,5.3 5,6.1" stroke="#3c3c3c" stroke-width="1.2" fill="none"/><circle cx="5" cy="7.6" r="0.75" fill="#3c3c3c"/></svg>
<svg class="b" style="left:1045.4px;top:25.4px" width="7" height="5" viewBox="0 0 7 5"><path d="M0.3,0.5 L6.7,0.5 L3.5,4.3Z" fill="#d6d6d6"/></svg>
<div class="b" style="left:0px;top:898.3px;width:1060px;height:1.4px;background:#191919;"></div>
<div class="b" style="left:0px;top:899.6px;width:1060px;height:4.4px;background:#2a2a2a;"></div>
</div>
<div id="R">
<div class="b" style="left:0px;top:0px;width:498px;height:18px;background:#282828;"></div>
<div class="b" style="left:0.2px;top:1px;width:71.6px;height:17px;background:#3c3c3c;border-radius:3px 3px 0 0"></div>
<svg class="b" style="left:7.6px;top:4.4px" width="11" height="11" viewBox="0 0 11 11"><path d="M3.4,0.5V10.5M7.4,0.5V10.5M0.5,3.4H10.5M0.5,7.4H10.5" stroke="#c4c4c4" stroke-width="1.15" fill="none"/></svg>
<div class="t" style="left:22.7px;top:4.04px;font-size:12px;color:#d2d2d2;letter-spacing:-0.29px;">Scene</div>
<svg class="b" style="left:483px;top:4px" width="4" height="11" viewBox="0 0 4 11"><circle cx="2" cy="1.6" r="1.05" fill="#d0d0d0"/><circle cx="2" cy="5.4" r="1.05" fill="#d0d0d0"/><circle cx="2" cy="9.2" r="1.05" fill="#d0d0d0"/></svg>
<div class="b" style="left:0px;top:18px;width:498px;height:24px;background:#3c3c3c;"></div>
<div class="b" style="left:6.3px;top:23px;width:1px;height:14.5px;background:#303030;"></div><div class="b" style="left:8.6px;top:23px;width:1px;height:14.5px;background:#303030;"></div>
<div class="b" style="left:163.2px;top:23px;width:1px;height:14.5px;background:#303030;"></div><div class="b" style="left:165.5px;top:23px;width:1px;height:14.5px;background:#303030;"></div>
<div class="b" style="left:293.3px;top:23px;width:1px;height:14.5px;background:#303030;"></div><div class="b" style="left:295.6px;top:23px;width:1px;height:14.5px;background:#303030;"></div>
<div class="b" style="left:471.2px;top:23px;width:1px;height:14.5px;background:#303030;"></div><div class="b" style="left:473.5px;top:23px;width:1px;height:14.5px;background:#303030;"></div>
<div class="b" style="left:14.8px;top:21.2px;width:69.7px;height:18.8px;background:#515151;border-radius:3px"></div>
<svg class="b" style="left:18px;top:23.4px" width="14" height="14" viewBox="0 0 14 14"><rect x="0.6" y="0.6" width="12.8" height="12.8" fill="none" stroke="#c4c4c4" stroke-width="1"/><path d="M2.2,11.8 L11.8,2.2" stroke="#c4c4c4" stroke-width="0.9"/><circle cx="7" cy="7" r="2.4" fill="#515151" stroke="#f0703a" stroke-width="1.3"/></svg>
<div class="t" style="left:33px;top:24.94px;font-size:12px;color:#dadada;letter-spacing:-0.17px;">Center</div>
<svg class="b" style="left:71.3px;top:28px" width="7.8" height="5" viewBox="0 0 8 5"><path d="M0.3,0.4 L7.7,0.4 L4,4.7Z" fill="#d8d8d8"/></svg>
<div class="b" style="left:87.3px;top:21.2px;width:67.5px;height:18.8px;background:#515151;border-radius:3px"></div>
<svg class="b" style="left:90.8px;top:23.4px" width="15" height="14.4" viewBox="0 0 15 14.4"><circle cx="6.6" cy="6.6" r="6" fill="none" stroke="#c4c4c4" stroke-width="1"/><ellipse cx="6.6" cy="6.6" rx="2.8" ry="6" fill="none" stroke="#c4c4c4" stroke-width="0.9"/><path d="M0.6,6.6H12.6M1.6,3.4H11.6M1.6,9.8H11.6" stroke="#c4c4c4" stroke-width="0.9"/><circle cx="11.4" cy="11" r="2.2" fill="#515151" stroke="#f0703a" stroke-width="1.3"/></svg>
<div class="t" style="left:105.7px;top:24.94px;font-size:12px;color:#dadada;letter-spacing:-0.4px;">Global</div>
<svg class="b" style="left:141.8px;top:28px" width="7.8" height="5" viewBox="0 0 8 5"><path d="M0.3,0.4 L7.7,0.4 L4,4.7Z" fill="#d8d8d8"/></svg>
<div class="b" style="left:174px;top:21.2px;width:34px;height:18.8px;background:#2a2a2a;border:1px solid #1e1e1e;border-radius:3px"></div>
<div class="t" style="left:176.8px;top:25.04px;font-size:12px;color:#d2d2d2;">1</div>
<div class="b" style="left:212.7px;top:21.2px;width:20.5px;height:18.8px;background:#46607c;border-radius:3px 0 0 3px"></div>
<div class="b" style="left:233.9px;top:21.2px;width:13.4px;height:18.8px;background:#46607c;border-radius:0 3px 3px 0"></div>
<svg class="b" style="left:216px;top:23.4px" width="14" height="14" viewBox="0 0 14 14"><path d="M4,0.6V12.2M9.6,0.6V7.6M0.9,2.9H12.3M0.9,6.4H12.3M0.9,10H7.2" stroke="#e8e8e8" stroke-width="1.05" fill="none"/><path d="M8.6,7.9 L10.9,10.6 L13.2,7.9 M10.9,10.6 V13.3" stroke="#f4f4f4" stroke-width="1.5" fill="none"/></svg>
<svg class="b" style="left:236.7px;top:28.4px" width="7.8" height="5" viewBox="0 0 8 5"><path d="M0.3,0.4 L7.7,0.4 L4,4.7Z" fill="#e4e4e4"/></svg>
<div class="b" style="left:250px;top:21.2px;width:21.3px;height:18.8px;background:#515151;border-radius:3px 0 0 3px"></div>
<div class="b" style="left:272.2px;top:21.2px;width:12.8px;height:18.8px;background:#515151;border-radius:0 3px 3px 0"></div>
<svg class="b" style="left:253.6px;top:23.2px" width="15" height="14.6" viewBox="0 0 15 14.6"><path d="M3.3,0.8V12.4M9,0.8V7.6M0.5,3.1H12.2M0.5,6.6H12.2M0.5,10.1H5.6" stroke="#b8b8b8" stroke-width="1" stroke-dasharray="2.2 0.7" fill="none"/><path d="M7.6,8.7 H10.9 Q13.4,8.7 13.4,10.9 Q13.4,13.1 10.9,13.1 H7.6" stroke="#f0703a" stroke-width="1.7" fill="none"/><rect x="6" y="7.85" width="1.8" height="1.7" fill="#f0f0f0"/><rect x="6" y="12.25" width="1.8" height="1.7" fill="#f0f0f0"/></svg>
<svg class="b" style="left:275px;top:28.4px" width="7.8" height="5" viewBox="0 0 8 5"><path d="M0.3,0.4 L7.7,0.4 L4,4.7Z" fill="#d8d8d8"/></svg>
<div class="b" style="left:302.2px;top:21.2px;width:30px;height:18.8px;background:#515151;border-radius:3px 0 0 3px"></div>
<div class="b" style="left:333px;top:21.2px;width:30px;height:18.8px;background:#515151;border-radius:0"></div>
<div class="b" style="left:363.8px;top:21.2px;width:30.4px;height:18.8px;background:#515151;border-radius:0"></div>
<div class="b" style="left:395px;top:21.2px;width:30px;height:18.8px;background:#46607c;border-radius:0 3px 3px 0"></div>
<svg class="b" style="left:310.6px;top:23.8px" width="13.6" height="13.6" viewBox="0 0 14 14"><circle cx="7" cy="7" r="6.3" fill="none" stroke="#d2d2d2" stroke-width="1"/><path d="M5.8,0.9V13.1M0.8,7.4Q7,9.2 13.2,7.4" stroke="#d2d2d2" stroke-width="1" fill="none"/></svg>
<svg class="b" style="left:341.4px;top:23.8px" width="13.6" height="13.6" viewBox="0 0 14 14"><circle cx="7" cy="7" r="6.3" fill="#515151" stroke="#d2d2d2" stroke-width="1"/><path d="M13,6 A6.2,6.2 0 0 1 3,11.8 Q10.5,12.5 13,6Z" fill="#c8c8c8"/><path d="M5.8,1 V8.2 M0.9,7.4 Q4,8.6 8,8.2" stroke="#d2d2d2" stroke-width="1" fill="none"/><circle cx="7" cy="7" r="6.3" fill="none" stroke="#d2d2d2" stroke-width="1"/></svg>
<svg class="b" style="left:372px;top:23.6px" width="14" height="14" viewBox="0 0 14 14"><circle cx="7" cy="7" r="6.7" fill="#d2d2d2"/></svg>
<svg class="b" style="left:402.8px;top:23.4px" width="14.4" height="14.4" viewBox="0 0 14.4 14.4"><circle cx="7.2" cy="7.2" r="6.8" fill="#e6e6e6"/><circle cx="5.9" cy="5.9" r="4.7" fill="#46607c"/></svg>
<div class="b" style="left:428px;top:21.2px;width:20.8px;height:18.8px;background:#515151;border-radius:3px 0 0 3px"></div>
<div class="b" style="left:449.7px;top:21.2px;width:13.3px;height:18.8px;background:#515151;border-radius:0 3px 3px 0"></div>
<svg class="b" style="left:431.4px;top:23.2px" width="14" height="15" viewBox="0 0 14 15"><ellipse cx="7" cy="8.8" rx="4.3" ry="5" fill="#c4c4c4"/><circle cx="7" cy="3.4" r="2.5" fill="#c4c4c4"/><path d="M3.6,6.2 L1,4.6 M3.3,8.8 H0.6 M3.6,11.2 L1.2,13.2 M10.4,6.2 L13,4.6 M10.7,8.8 H13.4 M10.4,11.2 L12.8,13.2 M5.6,1.8 L4.4,0.4 M8.4,1.8 L9.6,0.4" stroke="#c4c4c4" stroke-width="1"/></svg>
<svg class="b" style="left:452.6px;top:28.4px" width="7.8" height="5" viewBox="0 0 8 5"><path d="M0.3,0.4 L7.7,0.4 L4,4.7Z" fill="#d8d8d8"/></svg>
<div class="b" style="left:480px;top:21.2px;width:33px;height:18.8px;background:#46607c;border-radius:3px 0 0 3px"></div>
<div class="t" style="left:488.6px;top:24.84px;font-size:12px;color:#ececec;">2D</div>
<div class="b" style="left:0;top:42px;width:498px;height:539.2px;background:#012784;overflow:hidden">
<svg class="b" style="left:0;top:0" width="498" height="539.2" viewBox="0 0 498 539.2"><g fill="#6fb3e8"><circle cx="-19.35" cy="-25.25" r="30.41"/><circle cx="41.5" cy="-25.25" r="30.41"/><circle cx="102.35" cy="-25.25" r="30.41"/><circle cx="163.2" cy="-25.25" r="30.41"/><circle cx="224.05" cy="-25.25" r="30.41"/><circle cx="284.9" cy="-25.25" r="30.41"/><circle cx="345.75" cy="-25.25" r="30.41"/><circle cx="406.6" cy="-25.25" r="30.41"/><circle cx="467.45" cy="-25.25" r="30.41"/><circle cx="528.3" cy="-25.25" r="30.41"/><circle cx="11.05" cy="35.6" r="29.91"/><circle cx="71.9" cy="35.6" r="29.91"/><circle cx="132.75" cy="35.6" r="29.91"/><circle cx="193.6" cy="35.6" r="29.91"/><circle cx="254.45" cy="35.6" r="29.91"/><circle cx="315.3" cy="35.6" r="29.91"/><circle cx="376.15" cy="35.6" r="29.91"/><circle cx="437" cy="35.6" r="29.91"/><circle cx="497.85" cy="35.6" r="29.91"/><circle cx="-19.35" cy="96.45" r="28.98"/><circle cx="41.5" cy="96.45" r="28.98"/><circle cx="102.35" cy="96.45" r="28.98"/><circle cx="163.2" cy="96.45" r="28.98"/><circle cx="224.05" cy="96.45" r="28.98"/><circle cx="284.9" cy="96.45" r="28.98"/><circle cx="345.75" cy="96.45" r="28.98"/><circle cx="406.6" cy="96.45" r="28.98"/><circle cx="467.45" cy="96.45" r="28.98"/><circle cx="11.05" cy="157.3" r="28.06"/><circle cx="71.9" cy="157.3" r="28.06"/><circle cx="132.75" cy="157.3" r="28.06"/><circle cx="193.6" cy="157.3" r="28.06"/><circle cx="254.45" cy="157.3" r="28.06"/><circle cx="315.3" cy="157.3" r="28.06"/><circle cx="376.15" cy="157.3" r="28.06"/><circle cx="437" cy="157.3" r="28.06"/><circle cx="497.85" cy="157.3" r="28.06"/><circle cx="-19.35" cy="218.15" r="27.13"/><circle cx="41.5" cy="218.15" r="27.13"/><circle cx="102.35" cy="218.15" r="27.13"/><circle cx="163.2" cy="218.15" r="27.13"/><circle cx="224.05" cy="218.15" r="27.13"/><circle cx="284.9" cy="218.15" r="27.13"/><circle cx="345.75" cy="218.15" r="27.13"/><circle cx="406.6" cy="218.15" r="27.13"/><circle cx="467.45" cy="218.15" r="27.13"/><circle cx="11.05" cy="279" r="26.21"/><circle cx="71.9" cy="279" r="26.21"/><circle cx="132.75" cy="279" r="26.21"/><circle cx="193.6" cy="279" r="26.21"/><circle cx="254.45" cy="279" r="26.21"/><circle cx="315.3" cy="279" r="26.21"/><circle cx="376.15" cy="279" r="26.21"/><circle cx="437" cy="279" r="26.21"/><circle cx="497.85" cy="279" r="26.21"/><circle cx="-19.35" cy="339.85" r="25.28"/><circle cx="41.5" cy="339.85" r="25.28"/><circle cx="102.35" cy="339.85" r="25.28"/><circle cx="163.2" cy="339.85" r="25.28"/><circle cx="224.05" cy="339.85" r="25.28"/><circle cx="284.9" cy="339.85" r="25.28"/><circle cx="345.75" cy="339.85" r="25.28"/><circle cx="406.6" cy="339.85" r="25.28"/><circle cx="467.45" cy="339.85" r="25.28"/><circle cx="11.05" cy="400.7" r="24.35"/><circle cx="71.9" cy="400.7" r="24.35"/><circle cx="132.75" cy="400.7" r="24.35"/><circle cx="193.6" cy="400.7" r="24.35"/><circle cx="254.45" cy="400.7" r="24.35"/><circle cx="315.3" cy="400.7" r="24.35"/><circle cx="376.15" cy="400.7" r="24.35"/><circle cx="437" cy="400.7" r="24.35"/><circle cx="497.85" cy="400.7" r="24.35"/><circle cx="-19.35" cy="461.55" r="23.43"/><circle cx="41.5" cy="461.55" r="23.43"/><circle cx="102.35" cy="461.55" r="23.43"/><circle cx="163.2" cy="461.55" r="23.43"/><circle cx="224.05" cy="461.55" r="23.43"/><circle cx="284.9" cy="461.55" r="23.43"/><circle cx="345.75" cy="461.55" r="23.43"/><circle cx="406.6" cy="461.55" r="23.43"/><circle cx="467.45" cy="461.55" r="23.43"/><circle cx="11.05" cy="522.4" r="22.5"/><circle cx="71.9" cy="522.4" r="22.5"/><circle cx="132.75" cy="522.4" r="22.5"/><circle cx="193.6" cy="522.4" r="22.5"/><circle cx="254.45" cy="522.4" r="22.5"/><circle cx="315.3" cy="522.4" r="22.5"/><circle cx="376.15" cy="522.4" r="22.5"/><circle cx="437" cy="522.4" r="22.5"/><circle cx="497.85" cy="522.4" r="22.5"/><circle cx="-19.35" cy="583.25" r="21.58"/><circle cx="41.5" cy="583.25" r="21.58"/><circle cx="102.35" cy="583.25" r="21.58"/><circle cx="163.2" cy="583.25" r="21.58"/><circle cx="224.05" cy="583.25" r="21.58"/><circle cx="284.9" cy="583.25" r="21.58"/><circle cx="345.75" cy="583.25" r="21.58"/><circle cx="406.6" cy="583.25" r="21.58"/><circle cx="467.45" cy="583.25" r="21.58"/></g></svg>
<svg class="b" style="left:0;top:0" width="498" height="539.2" viewBox="0 0 498 539.2"><defs><linearGradient id="bg1" x1="0" x2="1" y1="0" y2="0"><stop offset="0" stop-color="#e1487a"/><stop offset="0.5" stop-color="#dd5b6b"/><stop offset="0.935" stop-color="#d96c5d"/><stop offset="1" stop-color="#dd8a3c"/></linearGradient></defs><rect x="163.4" y="76.7" width="14.8" height="80.7" fill="#000"/><rect x="178" y="76.7" width="309.2" height="80.7" fill="url(#bg1)"/><rect x="163.4" y="168.7" width="14.8" height="79.6" fill="#000"/><rect x="178" y="168.7" width="309.2" height="79.6" fill="url(#bg1)"/><rect x="163.4" y="260" width="14.8" height="80" fill="#000"/><rect x="178" y="260" width="309.2" height="80" fill="url(#bg1)"/><rect x="163.4" y="351.3" width="14.8" height="79.6" fill="#000"/><rect x="178" y="351.3" width="309.2" height="79.6" fill="url(#bg1)"/></svg>
<div class="t" style="left:290.61px;top:105.63px;font-size:24px;color:#fff;">Button</div>
<div class="t" style="left:290.61px;top:197.08px;font-size:24px;color:#fff;">Button</div>
<div class="t" style="left:290.61px;top:288.58px;font-size:24px;color:#fff;">Button</div>
<div class="t" style="left:290.61px;top:379.68px;font-size:24px;color:#fff;">Button</div>
<svg class="b" style="left:0;top:0" width="498" height="539.2" viewBox="0 0 498 539.2" shape-rendering="crispEdges"><path d="M10.52,0V539.2" stroke="rgba(128,128,128,0.055)" stroke-width="1"/><path d="M25.74,0V539.2" stroke="rgba(128,128,128,0.055)" stroke-width="1"/><path d="M40.96,0V539.2" stroke="rgba(128,128,128,0.055)" stroke-width="1"/><path d="M56.18,0V539.2" stroke="rgba(128,128,128,0.055)" stroke-width="1"/><path d="M71.4,0V539.2" stroke="rgba(150,150,150,0.42)" stroke-width="1"/><path d="M86.62,0V539.2" stroke="rgba(128,128,128,0.055)" stroke-width="1"/><path d="M101.84,0V539.2" stroke="rgba(128,128,128,0.055)" stroke-width="1"/><path d="M117.06,0V539.2" stroke="rgba(128,128,128,0.055)" stroke-width="1"/><path d="M132.28,0V539.2" stroke="rgba(128,128,128,0.055)" stroke-width="1"/><path d="M147.5,0V539.2" stroke="rgba(128,128,128,0.055)" stroke-width="1"/><path d="M162.72,0V539.2" stroke="rgba(128,128,128,0.055)" stroke-width="1"/><path d="M177.94,0V539.2" stroke="rgba(128,128,128,0.055)" stroke-width="1"/><path d="M193.16,0V539.2" stroke="rgba(128,128,128,0.055)" stroke-width="1"/><path d="M208.38,0V539.2" stroke="rgba(128,128,128,0.055)" stroke-width="1"/><path d="M223.6,0V539.2" stroke="rgba(150,150,150,0.42)" stroke-width="1"/><path d="M238.82,0V539.2" stroke="rgba(128,128,128,0.055)" stroke-width="1"/><path d="M254.04,0V539.2" stroke="rgba(128,128,128,0.055)" stroke-width="1"/><path d="M269.26,0V539.2" stroke="rgba(128,128,128,0.055)" stroke-width="1"/><path d="M284.48,0V539.2" stroke="rgba(128,128,128,0.055)" stroke-width="1"/><path d="M299.7,0V539.2" stroke="rgba(128,128,128,0.055)" stroke-width="1"/><path d="M314.92,0V539.2" stroke="rgba(128,128,128,0.055)" stroke-width="1"/><path d="M330.14,0V539.2" stroke="rgba(128,128,128,0.055)" stroke-width="1"/><path d="M345.36,0V539.2" stroke="rgba(128,128,128,0.055)" stroke-width="1"/><path d="M360.58,0V539.2" stroke="rgba(128,128,128,0.055)" stroke-width="1"/><path d="M375.8,0V539.2" stroke="rgba(150,150,150,0.42)" stroke-width="1"/><path d="M391.02,0V539.2" stroke="rgba(128,128,128,0.055)" stroke-width="1"/><path d="M406.24,0V539.2" stroke="rgba(128,128,128,0.055)" stroke-width="1"/><path d="M421.46,0V539.2" stroke="rgba(128,128,128,0.055)" stroke-width="1"/><path d="M436.68,0V539.2" stroke="rgba(128,128,128,0.055)" stroke-width="1"/><path d="M451.9,0V539.2" stroke="rgba(128,128,128,0.055)" stroke-width="1"/><path d="M467.12,0V539.2" stroke="rgba(128,128,128,0.055)" stroke-width="1"/><path d="M482.34,0V539.2" stroke="rgba(128,128,128,0.055)" stroke-width="1"/><path d="M497.56,0V539.2" stroke="rgba(128,128,128,0.055)" stroke-width="1"/><path d="M0,5.68H498" stroke="rgba(128,128,128,0.055)" stroke-width="1"/><path d="M0,20.9H498" stroke="rgba(128,128,128,0.055)" stroke-width="1"/><path d="M0,36.12H498" stroke="rgba(128,128,128,0.055)" stroke-width="1"/><path d="M0,51.34H498" stroke="rgba(128,128,128,0.055)" stroke-width="1"/><path d="M0,66.56H498" stroke="rgba(128,128,128,0.055)" stroke-width="1"/><path d="M0,81.78H498" stroke="rgba(128,128,128,0.055)" stroke-width="1"/><path d="M0,97H498" stroke="rgba(150,150,150,0.42)" stroke-width="1"/><path d="M0,112.22H498" stroke="rgba(128,128,128,0.055)" stroke-width="1"/><path d="M0,127.44H498" stroke="rgba(128,128,128,0.055)" stroke-width="1"/><path d="M0,142.66H498" stroke="rgba(128,128,128,0.055)" stroke-width="1"/><path d="M0,157.88H498" stroke="rgba(128,128,128,0.055)" stroke-width="1"/><path d="M0,173.1H498" stroke="rgba(128,128,128,0.055)" stroke-width="1"/><path d="M0,188.32H498" stroke="rgba(128,128,128,0.055)" stroke-width="1"/><path d="M0,203.54H498" stroke="rgba(128,128,128,0.055)" stroke-width="1"/><path d="M0,218.76H498" stroke="rgba(128,128,128,0.055)" stroke-width="1"/><path d="M0,233.98H498" stroke="rgba(128,128,128,0.055)" stroke-width="1"/><path d="M0,249.2H498" stroke="rgba(150,150,150,0.42)" stroke-width="1"/><path d="M0,264.42H498" stroke="rgba(128,128,128,0.055)" stroke-width="1"/><path d="M0,279.64H498" stroke="rgba(128,128,128,0.055)" stroke-width="1"/><path d="M0,294.86H498" stroke="rgba(128,128,128,0.055)" stroke-width="1"/><path d="M0,310.08H498" stroke="rgba(128,128,128,0.055)" stroke-width="1"/><path d="M0,325.3H498" stroke="rgba(128,128,128,0.055)" stroke-width="1"/><path d="M0,340.52H498" stroke="rgba(128,128,128,0.055)" stroke-width="1"/><path d="M0,355.74H498" stroke="rgba(128,128,128,0.055)" stroke-width="1"/><path d="M0,370.96H498" stroke="rgba(128,128,128,0.055)" stroke-width="1"/><path d="M0,386.18H498" stroke="rgba(128,128,128,0.055)" stroke-width="1"/><path d="M0,401.4H498" stroke="rgba(150,150,150,0.42)" stroke-width="1"/><path d="M0,416.62H498" stroke="rgba(128,128,128,0.055)" stroke-width="1"/><path d="M0,431.84H498" stroke="rgba(128,128,128,0.055)" stroke-width="1"/><path d="M0,447.06H498" stroke="rgba(128,128,128,0.055)" stroke-width="1"/><path d="M0,462.28H498" stroke="rgba(128,128,128,0.055)" stroke-width="1"/><path d="M0,477.5H498" stroke="rgba(128,128,128,0.055)" stroke-width="1"/><path d="M0,492.72H498" stroke="rgba(128,128,128,0.055)" stroke-width="1"/><path d="M0,507.94H498" stroke="rgba(128,128,128,0.055)" stroke-width="1"/><path d="M0,523.16H498" stroke="rgba(128,128,128,0.055)" stroke-width="1"/><path d="M0,538.38H498" stroke="rgba(128,128,128,0.055)" stroke-width="1"/></svg>
<div class="b" style="left:497px;top:0px;width:1px;height:539.2px;background:rgba(150,160,185,0.5);"></div>
</div>
<div class="b" style="left:2.4px;top:44.9px;width:39.4px;height:135.6px;background:rgba(14,26,38,0.93);border-radius:3px"></div>
<div class="b" style="left:14.6px;top:49.9px;width:14.8px;height:1px;background:#5e6a72;"></div>
<div class="b" style="left:14.6px;top:53px;width:14.8px;height:1px;background:#5e6a72;"></div>
<div class="b" style="left:5.1px;top:61px;width:34.3px;height:18.8px;background:#585858;border-radius:3px 3px 0 0"></div>
<div class="b" style="left:5.1px;top:81.2px;width:34.3px;height:18.1px;background:#585858;border-radius:0"></div>
<div class="b" style="left:5.1px;top:100.9px;width:34.3px;height:18.1px;background:#585858;border-radius:0"></div>
<div class="b" style="left:5.1px;top:120.3px;width:34.3px;height:18.2px;background:#585858;border-radius:0"></div>
<div class="b" style="left:5.1px;top:140px;width:34.3px;height:18.4px;background:#46607c;border-radius:0"></div>
<div class="b" style="left:5.1px;top:159.9px;width:34.3px;height:18px;background:#585858;border-radius:0 0 3px 3px"></div>
<svg class="b" style="left:14.95px;top:62.6px" width="15" height="15" viewBox="0 0 15 15"><g fill="#d2d2d2"><rect x="4.1" y="1.2" width="1.7" height="8" rx="0.85" transform="rotate(-9 4.9 9)"/><rect x="6.55" y="0.5" width="1.75" height="8.5" rx="0.85"/><rect x="9.0" y="1.1" width="1.7" height="8" rx="0.85" transform="rotate(9 9.8 9)"/><rect x="11.0" y="3.6" width="1.6" height="6.6" rx="0.8" transform="rotate(22 11.8 10)"/><path d="M3.9,7 H11.8 L11.2,10.6 Q10.4,14.2 7.6,14.2 H6.6 Q5,14.2 4.2,12.4 Z"/><path d="M4.6,12.8 L1.0,7.2 Q0.5,6.2 1.3,5.8 Q2.1,5.5 2.7,6.4 L5.2,9.6 Z"/></g></svg>
<svg class="b" style="left:14.75px;top:82.5px" width="15" height="15" viewBox="0 0 15 15"><path d="M7.5,2.2V5.6M7.5,9.4V12.8M2.2,7.5H5.6M9.4,7.5H12.8" stroke="#d2d2d2" stroke-width="1.1" fill="none"/><path d="M7.5,0.3L9.6,3.1H5.4ZM7.5,14.7L9.6,11.9H5.4ZM0.3,7.5L3.1,5.4V9.6ZM14.7,7.5L11.9,5.4V9.6Z" fill="#d2d2d2"/></svg>
<svg class="b" style="left:14.65px;top:102.4px" width="15.2" height="15.2" viewBox="-7.6 -7.6 15.2 15.2"><g stroke="#d2d2d2" stroke-width="1.05" fill="none"><path d="M0.5,6.8 A6.6,6.6 0 0 0 3.6,-5.7"/><path d="M6.9,-6.5 H2.9 V-2.4"/><path d="M-0.5,-6.8 A6.6,6.6 0 0 0 -3.6,5.7"/><path d="M-6.9,6.5 H-2.9 V2.4"/></g></svg>
<svg class="b" style="left:15.2px;top:123px" width="13.4" height="13" viewBox="0 0 13.4 13"><rect x="0.5" y="0.5" width="12.4" height="12" rx="0.8" fill="none" stroke="#d2d2d2" stroke-width="1"/><rect x="0.5" y="8.2" width="4.3" height="4.3" fill="none" stroke="#d2d2d2" stroke-width="1"/><path d="M6.2,7 L10,3 M7,2.7 H10.3 V6" stroke="#d2d2d2" stroke-width="1" fill="none"/></svg>
<svg class="b" style="left:15.3px;top:142.8px" width="13.6" height="13" viewBox="0 0 13.6 13"><g fill="#f4f4f4"><rect x="0" y="0" width="2.8" height="2.8"/><rect x="10.8" y="0" width="2.8" height="2.8"/><rect x="0" y="10.2" width="2.8" height="2.8"/><rect x="10.8" y="10.2" width="2.8" height="2.8"/></g><path d="M3.8,1.4H9.8M3.8,11.6H9.8M1.4,3.8V9.2M12.2,3.8V9.2" stroke="#e8e8e8" stroke-width="0.9" fill="none"/></svg>
<svg class="b" style="left:13.75px;top:160.4px" width="17" height="17" viewBox="-8.5 -8.5 17 17"><path d="M5.44,-2.54 A6,6 0 0 1 -2.54,5.44 M-5.44,2.54 A6,6 0 0 1 2.54,-5.44" stroke="#d2d2d2" stroke-width="1" fill="none"/><path d="M0,-2.6V2.6M-2.6,0H2.6" stroke="#d2d2d2" stroke-width="1.1" fill="none"/><path d="M0,-4.6L1.7,-2.4H-1.7ZM0,4.6L1.7,2.4H-1.7ZM-4.6,0L-2.4,1.7V-1.7ZM4.6,0L2.4,1.7V-1.7ZM7.6,-7.6V-4.8L4.8,-7.6ZM-7.6,7.6V4.8L-4.8,7.6Z" fill="#d2d2d2"/></svg>
<div class="b" style="left:0px;top:581.2px;width:498px;height:2px;background:#191919;"></div>
<div class="b" style="left:0px;top:583.2px;width:498px;height:17.6px;background:#282828;"></div>
<div class="b" style="left:0.2px;top:584px;width:69.2px;height:17px;background:#3c3c3c;border-radius:3px 3px 0 0"></div>
<svg class="b" style="left:6.6px;top:588.6px" width="13.4" height="8" viewBox="0 0 13.4 8"><path d="M3.6,0.4 H9.8 Q13,0.4 13,3.6 Q13,7.6 10.6,7.6 Q9.4,7.6 8.4,6.2 H5 Q4,7.6 2.8,7.6 Q0.4,7.6 0.4,3.6 Q0.4,0.4 3.6,0.4Z" fill="#c4c4c4"/><path d="M3.8,2.2V5.4M2.2,3.8H5.4" stroke="#3c3c3c" stroke-width="1"/><circle cx="9.8" cy="3.8" r="1.1" fill="#3c3c3c"/></svg>
<div class="t" style="left:23px;top:587.04px;font-size:12px;color:#d2d2d2;letter-spacing:-0.67px;">Game</div>
<svg class="b" style="left:483px;top:586.5px" width="4" height="11" viewBox="0 0 4 11"><circle cx="2" cy="1.6" r="1.05" fill="#d0d0d0"/><circle cx="2" cy="5.4" r="1.05" fill="#d0d0d0"/><circle cx="2" cy="9.2" r="1.05" fill="#d0d0d0"/></svg>
<div class="b" style="left:0px;top:600.8px;width:498px;height:19.4px;background:#3c3c3c;"></div>
<div class="t" style="left:4.2px;top:605.14px;font-size:12px;color:#c8c8c8;letter-spacing:-0.64px;">Game</div>
<svg class="b" style="left:73.4px;top:607.9px" width="7.2" height="4.8" viewBox="0 0 8 5"><path d="M0.3,0.4 L7.7,0.4 L4,4.7Z" fill="#c8c8c8"/></svg>
<div class="b" style="left:84.4px;top:600.8px;width:1px;height:19.4px;background:#2a2a2a;"></div>
<div class="t" style="left:94.5px;top:605.14px;font-size:12px;color:#c8c8c8;letter-spacing:-0.37px;">Display 1</div>
<svg class="b" style="left:154px;top:607.9px" width="7.2" height="4.8" viewBox="0 0 8 5"><path d="M0.3,0.4 L7.7,0.4 L4,4.7Z" fill="#c8c8c8"/></svg>
<div class="b" style="left:165px;top:600.8px;width:1px;height:19.4px;background:#2a2a2a;"></div>
<div class="t" style="left:169.3px;top:605.14px;font-size:12px;color:#c8c8c8;letter-spacing:-0.08px;">720p (1280x720)</div>
<svg class="b" style="left:304.2px;top:607.9px" width="7.2" height="4.8" viewBox="0 0 8 5"><path d="M0.3,0.4 L7.7,0.4 L4,4.7Z" fill="#c8c8c8"/></svg>
<div class="b" style="left:315.2px;top:600.8px;width:1px;height:19.4px;background:#2a2a2a;"></div>
<div class="t" style="left:322.5px;top:605.14px;font-size:12px;color:#c8c8c8;letter-spacing:-0.4px;">Scale</div>
<div class="b" style="left:362.5px;top:610.7px;width:23px;height:1px;background:#6a6a6a;"></div>
<div class="b" style="left:358px;top:606.7px;width:9px;height:9px;border-radius:50%;background:#9a9a9a"></div>
<div class="t" style="left:392.2px;top:605.14px;font-size:12px;color:#c8c8c8;letter-spacing:-0.21px;">0.82x</div>
<div class="b" style="left:430.2px;top:600.8px;width:1px;height:19.4px;background:#2a2a2a;"></div>
<div class="t" style="left:434.3px;top:605.14px;font-size:12px;color:#c8c8c8;letter-spacing:-0.23px;">Play Focused</div>
<svg class="b" style="left:1px;top:620px" width="497" height="280" viewBox="0 0 497 280"><defs><linearGradient id="bg2" x1="0" x2="1" y1="0" y2="0"><stop offset="0" stop-color="#e1487a"/><stop offset="0.5" stop-color="#dd5b6b"/><stop offset="0.92" stop-color="#d96c5d"/><stop offset="1" stop-color="#dd8a3c"/></linearGradient><clipPath id="gclip"><rect x="0.8" y="0.55" width="494.4" height="278.25"/></clipPath></defs><g clip-path="url(#gclip)"><rect x="0" y="0" width="497" height="280" fill="#012784"/><g transform="translate(0.8,0.35)" fill="#6fb3e8"><circle cx="7.71" cy="7.72" r="7"/><circle cx="23.14" cy="7.72" r="7"/><circle cx="38.58" cy="7.72" r="7"/><circle cx="54" cy="7.72" r="7"/><circle cx="69.44" cy="7.72" r="7"/><circle cx="84.86" cy="7.72" r="7"/><circle cx="100.3" cy="7.72" r="7"/><circle cx="115.72" cy="7.72" r="7"/><circle cx="131.16" cy="7.72" r="7"/><circle cx="146.59" cy="7.72" r="7"/><circle cx="162.01" cy="7.72" r="7"/><circle cx="177.44" cy="7.72" r="7"/><circle cx="192.88" cy="7.72" r="7"/><circle cx="208.31" cy="7.72" r="7"/><circle cx="223.73" cy="7.72" r="7"/><circle cx="239.16" cy="7.72" r="7"/><circle cx="254.59" cy="7.72" r="7"/><circle cx="270.02" cy="7.72" r="7"/><circle cx="285.45" cy="7.72" r="7"/><circle cx="300.88" cy="7.72" r="7"/><circle cx="316.31" cy="7.72" r="7"/><circle cx="331.75" cy="7.72" r="7"/><circle cx="347.18" cy="7.72" r="7"/><circle cx="362.61" cy="7.72" r="7"/><circle cx="378.03" cy="7.72" r="7"/><circle cx="393.46" cy="7.72" r="7"/><circle cx="408.89" cy="7.72" r="7"/><circle cx="424.32" cy="7.72" r="7"/><circle cx="439.75" cy="7.72" r="7"/><circle cx="455.19" cy="7.72" r="7"/><circle cx="470.62" cy="7.72" r="7"/><circle cx="486.05" cy="7.72" r="7"/><circle cx="0" cy="23.17" r="6.78"/><circle cx="15.43" cy="23.17" r="6.78"/><circle cx="30.86" cy="23.17" r="6.78"/><circle cx="46.29" cy="23.17" r="6.78"/><circle cx="61.72" cy="23.17" r="6.78"/><circle cx="77.15" cy="23.17" r="6.78"/><circle cx="92.58" cy="23.17" r="6.78"/><circle cx="108.01" cy="23.17" r="6.78"/><circle cx="123.44" cy="23.17" r="6.78"/><circle cx="138.87" cy="23.17" r="6.78"/><circle cx="154.3" cy="23.17" r="6.78"/><circle cx="169.73" cy="23.17" r="6.78"/><circle cx="185.16" cy="23.17" r="6.78"/><circle cx="200.59" cy="23.17" r="6.78"/><circle cx="216.02" cy="23.17" r="6.78"/><circle cx="231.45" cy="23.17" r="6.78"/><circle cx="246.88" cy="23.17" r="6.78"/><circle cx="262.31" cy="23.17" r="6.78"/><circle cx="277.74" cy="23.17" r="6.78"/><circle cx="293.17" cy="23.17" r="6.78"/><circle cx="308.6" cy="23.17" r="6.78"/><circle cx="324.03" cy="23.17" r="6.78"/><circle cx="339.46" cy="23.17" r="6.78"/><circle cx="354.89" cy="23.17" r="6.78"/><circle cx="370.32" cy="23.17" r="6.78"/><circle cx="385.75" cy="23.17" r="6.78"/><circle cx="401.18" cy="23.17" r="6.78"/><circle cx="416.61" cy="23.17" r="6.78"/><circle cx="432.04" cy="23.17" r="6.78"/><circle cx="447.47" cy="23.17" r="6.78"/><circle cx="462.9" cy="23.17" r="6.78"/><circle cx="478.33" cy="23.17" r="6.78"/><circle cx="493.76" cy="23.17" r="6.78"/><circle cx="7.71" cy="38.62" r="6.56"/><circle cx="23.14" cy="38.62" r="6.56"/><circle cx="38.58" cy="38.62" r="6.56"/><circle cx="54" cy="38.62" r="6.56"/><circle cx="69.44" cy="38.62" r="6.56"/><circle cx="84.86" cy="38.62" r="6.56"/><circle cx="100.3" cy="38.62" r="6.56"/><circle cx="115.72" cy="38.62" r="6.56"/><circle cx="131.16" cy="38.62" r="6.56"/><circle cx="146.59" cy="38.62" r="6.56"/><circle cx="162.01" cy="38.62" r="6.56"/><circle cx="177.44" cy="38.62" r="6.56"/><circle cx="192.88" cy="38.62" r="6.56"/><circle cx="208.31" cy="38.62" r="6.56"/><circle cx="223.73" cy="38.62" r="6.56"/><circle cx="239.16" cy="38.62" r="6.56"/><circle cx="254.59" cy="38.62" r="6.56"/><circle cx="270.02" cy="38.62" r="6.56"/><circle cx="285.45" cy="38.62" r="6.56"/><circle cx="300.88" cy="38.62" r="6.56"/><circle cx="316.31" cy="38.62" r="6.56"/><circle cx="331.75" cy="38.62" r="6.56"/><circle cx="347.18" cy="38.62" r="6.56"/><circle cx="362.61" cy="38.62" r="6.56"/><circle cx="378.03" cy="38.62" r="6.56"/><circle cx="393.46" cy="38.62" r="6.56"/><circle cx="408.89" cy="38.62" r="6.56"/><circle cx="424.32" cy="38.62" r="6.56"/><circle cx="439.75" cy="38.62" r="6.56"/><circle cx="455.19" cy="38.62" r="6.56"/><circle cx="470.62" cy="38.62" r="6.56"/><circle cx="486.05" cy="38.62" r="6.56"/><circle cx="0" cy="54.06" r="6.35"/><circle cx="15.43" cy="54.06" r="6.35"/><circle cx="30.86" cy="54.06" r="6.35"/><circle cx="46.29" cy="54.06" r="6.35"/><circle cx="61.72" cy="54.06" r="6.35"/><circle cx="77.15" cy="54.06" r="6.35"/><circle cx="92.58" cy="54.06" r="6.35"/><circle cx="108.01" cy="54.06" r="6.35"/><circle cx="123.44" cy="54.06" r="6.35"/><circle cx="138.87" cy="54.06" r="6.35"/><circle cx="154.3" cy="54.06" r="6.35"/><circle cx="169.73" cy="54.06" r="6.35"/><circle cx="185.16" cy="54.06" r="6.35"/><circle cx="200.59" cy="54.06" r="6.35"/><circle cx="216.02" cy="54.06" r="6.35"/><circle cx="231.45" cy="54.06" r="6.35"/><circle cx="246.88" cy="54.06" r="6.35"/><circle cx="262.31" cy="54.06" r="6.35"/><circle cx="277.74" cy="54.06" r="6.35"/><circle cx="293.17" cy="54.06" r="6.35"/><circle cx="308.6" cy="54.06" r="6.35"/><circle cx="324.03" cy="54.06" r="6.35"/><circle cx="339.46" cy="54.06" r="6.35"/><circle cx="354.89" cy="54.06" r="6.35"/><circle cx="370.32" cy="54.06" r="6.35"/><circle cx="385.75" cy="54.06" r="6.35"/><circle cx="401.18" cy="54.06" r="6.35"/><circle cx="416.61" cy="54.06" r="6.35"/><circle cx="432.04" cy="54.06" r="6.35"/><circle cx="447.47" cy="54.06" r="6.35"/><circle cx="462.9" cy="54.06" r="6.35"/><circle cx="478.33" cy="54.06" r="6.35"/><circle cx="493.76" cy="54.06" r="6.35"/><circle cx="7.71" cy="69.51" r="6.13"/><circle cx="23.14" cy="69.51" r="6.13"/><circle cx="38.58" cy="69.51" r="6.13"/><circle cx="54" cy="69.51" r="6.13"/><circle cx="69.44" cy="69.51" r="6.13"/><circle cx="84.86" cy="69.51" r="6.13"/><circle cx="100.3" cy="69.51" r="6.13"/><circle cx="115.72" cy="69.51" r="6.13"/><circle cx="131.16" cy="69.51" r="6.13"/><circle cx="146.59" cy="69.51" r="6.13"/><circle cx="162.01" cy="69.51" r="6.13"/><circle cx="177.44" cy="69.51" r="6.13"/><circle cx="192.88" cy="69.51" r="6.13"/><circle cx="208.31" cy="69.51" r="6.13"/><circle cx="223.73" cy="69.51" r="6.13"/><circle cx="239.16" cy="69.51" r="6.13"/><circle cx="254.59" cy="69.51" r="6.13"/><circle cx="270.02" cy="69.51" r="6.13"/><circle cx="285.45" cy="69.51" r="6.13"/><circle cx="300.88" cy="69.51" r="6.13"/><circle cx="316.31" cy="69.51" r="6.13"/><circle cx="331.75" cy="69.51" r="6.13"/><circle cx="347.18" cy="69.51" r="6.13"/><circle cx="362.61" cy="69.51" r="6.13"/><circle cx="378.03" cy="69.51" r="6.13"/><circle cx="393.46" cy="69.51" r="6.13"/><circle cx="408.89" cy="69.51" r="6.13"/><circle cx="424.32" cy="69.51" r="6.13"/><circle cx="439.75" cy="69.51" r="6.13"/><circle cx="455.19" cy="69.51" r="6.13"/><circle cx="470.62" cy="69.51" r="6.13"/><circle cx="486.05" cy="69.51" r="6.13"/><circle cx="0" cy="84.96" r="5.91"/><circle cx="15.43" cy="84.96" r="5.91"/><circle cx="30.86" cy="84.96" r="5.91"/><circle cx="46.29" cy="84.96" r="5.91"/><circle cx="61.72" cy="84.96" r="5.91"/><circle cx="77.15" cy="84.96" r="5.91"/><circle cx="92.58" cy="84.96" r="5.91"/><circle cx="108.01" cy="84.96" r="5.91"/><circle cx="123.44" cy="84.96" r="5.91"/><circle cx="138.87" cy="84.96" r="5.91"/><circle cx="154.3" cy="84.96" r="5.91"/><circle cx="169.73" cy="84.96" r="5.91"/><circle cx="185.16" cy="84.96" r="5.91"/><circle cx="200.59" cy="84.96" r="5.91"/><circle cx="216.02" cy="84.96" r="5.91"/><circle cx="231.45" cy="84.96" r="5.91"/><circle cx="246.88" cy="84.96" r="5.91"/><circle cx="262.31" cy="84.96" r="5.91"/><circle cx="277.74" cy="84.96" r="5.91"/><circle cx="293.17" cy="84.96" r="5.91"/><circle cx="308.6" cy="84.96" r="5.91"/><circle cx="324.03" cy="84.96" r="5.91"/><circle cx="339.46" cy="84.96" r="5.91"/><circle cx="354.89" cy="84.96" r="5.91"/><circle cx="370.32" cy="84.96" r="5.91"/><circle cx="385.75" cy="84.96" r="5.91"/><circle cx="401.18" cy="84.96" r="5.91"/><circle cx="416.61" cy="84.96" r="5.91"/><circle cx="432.04" cy="84.96" r="5.91"/><circle cx="447.47" cy="84.96" r="5.91"/><circle cx="462.9" cy="84.96" r="5.91"/><circle cx="478.33" cy="84.96" r="5.91"/><circle cx="493.76" cy="84.96" r="5.91"/><circle cx="7.71" cy="100.41" r="5.69"/><circle cx="23.14" cy="100.41" r="5.69"/><circle cx="38.58" cy="100.41" r="5.69"/><circle cx="54" cy="100.41" r="5.69"/><circle cx="69.44" cy="100.41" r="5.69"/><circle cx="84.86" cy="100.41" r="5.69"/><circle cx="100.3" cy="100.41" r="5.69"/><circle cx="115.72" cy="100.41" r="5.69"/><circle cx="131.16" cy="100.41" r="5.69"/><circle cx="146.59" cy="100.41" r="5.69"/><circle cx="162.01" cy="100.41" r="5.69"/><circle cx="177.44" cy="100.41" r="5.69"/><circle cx="192.88" cy="100.41" r="5.69"/><circle cx="208.31" cy="100.41" r="5.69"/><circle cx="223.73" cy="100.41" r="5.69"/><circle cx="239.16" cy="100.41" r="5.69"/><circle cx="254.59" cy="100.41" r="5.69"/><circle cx="270.02" cy="100.41" r="5.69"/><circle cx="285.45" cy="100.41" r="5.69"/><circle cx="300.88" cy="100.41" r="5.69"/><circle cx="316.31" cy="100.41" r="5.69"/><circle cx="331.75" cy="100.41" r="5.69"/><circle cx="347.18" cy="100.41" r="5.69"/><circle cx="362.61" cy="100.41" r="5.69"/><circle cx="378.03" cy="100.41" r="5.69"/><circle cx="393.46" cy="100.41" r="5.69"/><circle cx="408.89" cy="100.41" r="5.69"/><circle cx="424.32" cy="100.41" r="5.69"/><circle cx="439.75" cy="100.41" r="5.69"/><circle cx="455.19" cy="100.41" r="5.69"/><circle cx="470.62" cy="100.41" r="5.69"/><circle cx="486.05" cy="100.41" r="5.69"/><circle cx="0" cy="115.85" r="5.47"/><circle cx="15.43" cy="115.85" r="5.47"/><circle cx="30.86" cy="115.85" r="5.47"/><circle cx="46.29" cy="115.85" r="5.47"/><circle cx="61.72" cy="115.85" r="5.47"/><circle cx="77.15" cy="115.85" r="5.47"/><circle cx="92.58" cy="115.85" r="5.47"/><circle cx="108.01" cy="115.85" r="5.47"/><circle cx="123.44" cy="115.85" r="5.47"/><circle cx="138.87" cy="115.85" r="5.47"/><circle cx="154.3" cy="115.85" r="5.47"/><circle cx="169.73" cy="115.85" r="5.47"/><circle cx="185.16" cy="115.85" r="5.47"/><circle cx="200.59" cy="115.85" r="5.47"/><circle cx="216.02" cy="115.85" r="5.47"/><circle cx="231.45" cy="115.85" r="5.47"/><circle cx="246.88" cy="115.85" r="5.47"/><circle cx="262.31" cy="115.85" r="5.47"/><circle cx="277.74" cy="115.85" r="5.47"/><circle cx="293.17" cy="115.85" r="5.47"/><circle cx="308.6" cy="115.85" r="5.47"/><circle cx="324.03" cy="115.85" r="5.47"/><circle cx="339.46" cy="115.85" r="5.47"/><circle cx="354.89" cy="115.85" r="5.47"/><circle cx="370.32" cy="115.85" r="5.47"/><circle cx="385.75" cy="115.85" r="5.47"/><circle cx="401.18" cy="115.85" r="5.47"/><circle cx="416.61" cy="115.85" r="5.47"/><circle cx="432.04" cy="115.85" r="5.47"/><circle cx="447.47" cy="115.85" r="5.47"/><circle cx="462.9" cy="115.85" r="5.47"/><circle cx="478.33" cy="115.85" r="5.47"/><circle cx="493.76" cy="115.85" r="5.47"/><circle cx="7.71" cy="131.3" r="5.26"/><circle cx="23.14" cy="131.3" r="5.26"/><circle cx="38.58" cy="131.3" r="5.26"/><circle cx="54" cy="131.3" r="5.26"/><circle cx="69.44" cy="131.3" r="5.26"/><circle cx="84.86" cy="131.3" r="5.26"/><circle cx="100.3" cy="131.3" r="5.26"/><circle cx="115.72" cy="131.3" r="5.26"/><circle cx="131.16" cy="131.3" r="5.26"/><circle cx="146.59" cy="131.3" r="5.26"/><circle cx="162.01" cy="131.3" r="5.26"/><circle cx="177.44" cy="131.3" r="5.26"/><circle cx="192.88" cy="131.3" r="5.26"/><circle cx="208.31" cy="131.3" r="5.26"/><circle cx="223.73" cy="131.3" r="5.26"/><circle cx="239.16" cy="131.3" r="5.26"/><circle cx="254.59" cy="131.3" r="5.26"/><circle cx="270.02" cy="131.3" r="5.26"/><circle cx="285.45" cy="131.3" r="5.26"/><circle cx="300.88" cy="131.3" r="5.26"/><circle cx="316.31" cy="131.3" r="5.26"/><circle cx="331.75" cy="131.3" r="5.26"/><circle cx="347.18" cy="131.3" r="5.26"/><circle cx="362.61" cy="131.3" r="5.26"/><circle cx="378.03" cy="131.3" r="5.26"/><circle cx="393.46" cy="131.3" r="5.26"/><circle cx="408.89" cy="131.3" r="5.26"/><circle cx="424.32" cy="131.3" r="5.26"/><circle cx="439.75" cy="131.3" r="5.26"/><circle cx="455.19" cy="131.3" r="5.26"/><circle cx="470.62" cy="131.3" r="5.26"/><circle cx="486.05" cy="131.3" r="5.26"/><circle cx="0" cy="146.75" r="5.04"/><circle cx="15.43" cy="146.75" r="5.04"/><circle cx="30.86" cy="146.75" r="5.04"/><circle cx="46.29" cy="146.75" r="5.04"/><circle cx="61.72" cy="146.75" r="5.04"/><circle cx="77.15" cy="146.75" r="5.04"/><circle cx="92.58" cy="146.75" r="5.04"/><circle cx="108.01" cy="146.75" r="5.04"/><circle cx="123.44" cy="146.75" r="5.04"/><circle cx="138.87" cy="146.75" r="5.04"/><circle cx="154.3" cy="146.75" r="5.04"/><circle cx="169.73" cy="146.75" r="5.04"/><circle cx="185.16" cy="146.75" r="5.04"/><circle cx="200.59" cy="146.75" r="5.04"/><circle cx="216.02" cy="146.75" r="5.04"/><circle cx="231.45" cy="146.75" r="5.04"/><circle cx="246.88" cy="146.75" r="5.04"/><circle cx="262.31" cy="146.75" r="5.04"/><circle cx="277.74" cy="146.75" r="5.04"/><circle cx="293.17" cy="146.75" r="5.04"/><circle cx="308.6" cy="146.75" r="5.04"/><circle cx="324.03" cy="146.75" r="5.04"/><circle cx="339.46" cy="146.75" r="5.04"/><circle cx="354.89" cy="146.75" r="5.04"/><circle cx="370.32" cy="146.75" r="5.04"/><circle cx="385.75" cy="146.75" r="5.04"/><circle cx="401.18" cy="146.75" r="5.04"/><circle cx="416.61" cy="146.75" r="5.04"/><circle cx="432.04" cy="146.75" r="5.04"/><circle cx="447.47" cy="146.75" r="5.04"/><circle cx="462.9" cy="146.75" r="5.04"/><circle cx="478.33" cy="146.75" r="5.04"/><circle cx="493.76" cy="146.75" r="5.04"/><circle cx="7.71" cy="162.19" r="4.82"/><circle cx="23.14" cy="162.19" r="4.82"/><circle cx="38.58" cy="162.19" r="4.82"/><circle cx="54" cy="162.19" r="4.82"/><circle cx="69.44" cy="162.19" r="4.82"/><circle cx="84.86" cy="162.19" r="4.82"/><circle cx="100.3" cy="162.19" r="4.82"/><circle cx="115.72" cy="162.19" r="4.82"/><circle cx="131.16" cy="162.19" r="4.82"/><circle cx="146.59" cy="162.19" r="4.82"/><circle cx="162.01" cy="162.19" r="4.82"/><circle cx="177.44" cy="162.19" r="4.82"/><circle cx="192.88" cy="162.19" r="4.82"/><circle cx="208.31" cy="162.19" r="4.82"/><circle cx="223.73" cy="162.19" r="4.82"/><circle cx="239.16" cy="162.19" r="4.82"/><circle cx="254.59" cy="162.19" r="4.82"/><circle cx="270.02" cy="162.19" r="4.82"/><circle cx="285.45" cy="162.19" r="4.82"/><circle cx="300.88" cy="162.19" r="4.82"/><circle cx="316.31" cy="162.19" r="4.82"/><circle cx="331.75" cy="162.19" r="4.82"/><circle cx="347.18" cy="162.19" r="4.82"/><circle cx="362.61" cy="162.19" r="4.82"/><circle cx="378.03" cy="162.19" r="4.82"/><circle cx="393.46" cy="162.19" r="4.82"/><circle cx="408.89" cy="162.19" r="4.82"/><circle cx="424.32" cy="162.19" r="4.82"/><circle cx="439.75" cy="162.19" r="4.82"/><circle cx="455.19" cy="162.19" r="4.82"/><circle cx="470.62" cy="162.19" r="4.82"/><circle cx="486.05" cy="162.19" r="4.82"/><circle cx="0" cy="177.64" r="4.6"/><circle cx="15.43" cy="177.64" r="4.6"/><circle cx="30.86" cy="177.64" r="4.6"/><circle cx="46.29" cy="177.64" r="4.6"/><circle cx="61.72" cy="177.64" r="4.6"/><circle cx="77.15" cy="177.64" r="4.6"/><circle cx="92.58" cy="177.64" r="4.6"/><circle cx="108.01" cy="177.64" r="4.6"/><circle cx="123.44" cy="177.64" r="4.6"/><circle cx="138.87" cy="177.64" r="4.6"/><circle cx="154.3" cy="177.64" r="4.6"/><circle cx="169.73" cy="177.64" r="4.6"/><circle cx="185.16" cy="177.64" r="4.6"/><circle cx="200.59" cy="177.64" r="4.6"/><circle cx="216.02" cy="177.64" r="4.6"/><circle cx="231.45" cy="177.64" r="4.6"/><circle cx="246.88" cy="177.64" r="4.6"/><circle cx="262.31" cy="177.64" r="4.6"/><circle cx="277.74" cy="177.64" r="4.6"/><circle cx="293.17" cy="177.64" r="4.6"/><circle cx="308.6" cy="177.64" r="4.6"/><circle cx="324.03" cy="177.64" r="4.6"/><circle cx="339.46" cy="177.64" r="4.6"/><circle cx="354.89" cy="177.64" r="4.6"/><circle cx="370.32" cy="177.64" r="4.6"/><circle cx="385.75" cy="177.64" r="4.6"/><circle cx="401.18" cy="177.64" r="4.6"/><circle cx="416.61" cy="177.64" r="4.6"/><circle cx="432.04" cy="177.64" r="4.6"/><circle cx="447.47" cy="177.64" r="4.6"/><circle cx="462.9" cy="177.64" r="4.6"/><circle cx="478.33" cy="177.64" r="4.6"/><circle cx="493.76" cy="177.64" r="4.6"/><circle cx="7.71" cy="193.09" r="4.38"/><circle cx="23.14" cy="193.09" r="4.38"/><circle cx="38.58" cy="193.09" r="4.38"/><circle cx="54" cy="193.09" r="4.38"/><circle cx="69.44" cy="193.09" r="4.38"/><circle cx="84.86" cy="193.09" r="4.38"/><circle cx="100.3" cy="193.09" r="4.38"/><circle cx="115.72" cy="193.09" r="4.38"/><circle cx="131.16" cy="193.09" r="4.38"/><circle cx="146.59" cy="193.09" r="4.38"/><circle cx="162.01" cy="193.09" r="4.38"/><circle cx="177.44" cy="193.09" r="4.38"/><circle cx="192.88" cy="193.09" r="4.38"/><circle cx="208.31" cy="193.09" r="4.38"/><circle cx="223.73" cy="193.09" r="4.38"/><circle cx="239.16" cy="193.09" r="4.38"/><circle cx="254.59" cy="193.09" r="4.38"/><circle cx="270.02" cy="193.09" r="4.38"/><circle cx="285.45" cy="193.09" r="4.38"/><circle cx="300.88" cy="193.09" r="4.38"/><circle cx="316.31" cy="193.09" r="4.38"/><circle cx="331.75" cy="193.09" r="4.38"/><circle cx="347.18" cy="193.09" r="4.38"/><circle cx="362.61" cy="193.09" r="4.38"/><circle cx="378.03" cy="193.09" r="4.38"/><circle cx="393.46" cy="193.09" r="4.38"/><circle cx="408.89" cy="193.09" r="4.38"/><circle cx="424.32" cy="193.09" r="4.38"/><circle cx="439.75" cy="193.09" r="4.38"/><circle cx="455.19" cy="193.09" r="4.38"/><circle cx="470.62" cy="193.09" r="4.38"/><circle cx="486.05" cy="193.09" r="4.38"/><circle cx="0" cy="208.53" r="4.17"/><circle cx="15.43" cy="208.53" r="4.17"/><circle cx="30.86" cy="208.53" r="4.17"/><circle cx="46.29" cy="208.53" r="4.17"/><circle cx="61.72" cy="208.53" r="4.17"/><circle cx="77.15" cy="208.53" r="4.17"/><circle cx="92.58" cy="208.53" r="4.17"/><circle cx="108.01" cy="208.53" r="4.17"/><circle cx="123.44" cy="208.53" r="4.17"/><circle cx="138.87" cy="208.53" r="4.17"/><circle cx="154.3" cy="208.53" r="4.17"/><circle cx="169.73" cy="208.53" r="4.17"/><circle cx="185.16" cy="208.53" r="4.17"/><circle cx="200.59" cy="208.53" r="4.17"/><circle cx="216.02" cy="208.53" r="4.17"/><circle cx="231.45" cy="208.53" r="4.17"/><circle cx="246.88" cy="208.53" r="4.17"/><circle cx="262.31" cy="208.53" r="4.17"/><circle cx="277.74" cy="208.53" r="4.17"/><circle cx="293.17" cy="208.53" r="4.17"/><circle cx="308.6" cy="208.53" r="4.17"/><circle cx="324.03" cy="208.53" r="4.17"/><circle cx="339.46" cy="208.53" r="4.17"/><circle cx="354.89" cy="208.53" r="4.17"/><circle cx="370.32" cy="208.53" r="4.17"/><circle cx="385.75" cy="208.53" r="4.17"/><circle cx="401.18" cy="208.53" r="4.17"/><circle cx="416.61" cy="208.53" r="4.17"/><circle cx="432.04" cy="208.53" r="4.17"/><circle cx="447.47" cy="208.53" r="4.17"/><circle cx="462.9" cy="208.53" r="4.17"/><circle cx="478.33" cy="208.53" r="4.17"/><circle cx="493.76" cy="208.53" r="4.17"/><circle cx="7.71" cy="223.98" r="3.95"/><circle cx="23.14" cy="223.98" r="3.95"/><circle cx="38.58" cy="223.98" r="3.95"/><circle cx="54" cy="223.98" r="3.95"/><circle cx="69.44" cy="223.98" r="3.95"/><circle cx="84.86" cy="223.98" r="3.95"/><circle cx="100.3" cy="223.98" r="3.95"/><circle cx="115.72" cy="223.98" r="3.95"/><circle cx="131.16" cy="223.98" r="3.95"/><circle cx="146.59" cy="223.98" r="3.95"/><circle cx="162.01" cy="223.98" r="3.95"/><circle cx="177.44" cy="223.98" r="3.95"/><circle cx="192.88" cy="223.98" r="3.95"/><circle cx="208.31" cy="223.98" r="3.95"/><circle cx="223.73" cy="223.98" r="3.95"/><circle cx="239.16" cy="223.98" r="3.95"/><circle cx="254.59" cy="223.98" r="3.95"/><circle cx="270.02" cy="223.98" r="3.95"/><circle cx="285.45" cy="223.98" r="3.95"/><circle cx="300.88" cy="223.98" r="3.95"/><circle cx="316.31" cy="223.98" r="3.95"/><circle cx="331.75" cy="223.98" r="3.95"/><circle cx="347.18" cy="223.98" r="3.95"/><circle cx="362.61" cy="223.98" r="3.95"/><circle cx="378.03" cy="223.98" r="3.95"/><circle cx="393.46" cy="223.98" r="3.95"/><circle cx="408.89" cy="223.98" r="3.95"/><circle cx="424.32" cy="223.98" r="3.95"/><circle cx="439.75" cy="223.98" r="3.95"/><circle cx="455.19" cy="223.98" r="3.95"/><circle cx="470.62" cy="223.98" r="3.95"/><circle cx="486.05" cy="223.98" r="3.95"/><circle cx="0" cy="239.43" r="3.73"/><circle cx="15.43" cy="239.43" r="3.73"/><circle cx="30.86" cy="239.43" r="3.73"/><circle cx="46.29" cy="239.43" r="3.73"/><circle cx="61.72" cy="239.43" r="3.73"/><circle cx="77.15" cy="239.43" r="3.73"/><circle cx="92.58" cy="239.43" r="3.73"/><circle cx="108.01" cy="239.43" r="3.73"/><circle cx="123.44" cy="239.43" r="3.73"/><circle cx="138.87" cy="239.43" r="3.73"/><circle cx="154.3" cy="239.43" r="3.73"/><circle cx="169.73" cy="239.43" r="3.73"/><circle cx="185.16" cy="239.43" r="3.73"/><circle cx="200.59" cy="239.43" r="3.73"/><circle cx="216.02" cy="239.43" r="3.73"/><circle cx="231.45" cy="239.43" r="3.73"/><circle cx="246.88" cy="239.43" r="3.73"/><circle cx="262.31" cy="239.43" r="3.73"/><circle cx="277.74" cy="239.43" r="3.73"/><circle cx="293.17" cy="239.43" r="3.73"/><circle cx="308.6" cy="239.43" r="3.73"/><circle cx="324.03" cy="239.43" r="3.73"/><circle cx="339.46" cy="239.43" r="3.73"/><circle cx="354.89" cy="239.43" r="3.73"/><circle cx="370.32" cy="239.43" r="3.73"/><circle cx="385.75" cy="239.43" r="3.73"/><circle cx="401.18" cy="239.43" r="3.73"/><circle cx="416.61" cy="239.43" r="3.73"/><circle cx="432.04" cy="239.43" r="3.73"/><circle cx="447.47" cy="239.43" r="3.73"/><circle cx="462.9" cy="239.43" r="3.73"/><circle cx="478.33" cy="239.43" r="3.73"/><circle cx="493.76" cy="239.43" r="3.73"/><circle cx="7.71" cy="254.88" r="3.51"/><circle cx="23.14" cy="254.88" r="3.51"/><circle cx="38.58" cy="254.88" r="3.51"/><circle cx="54" cy="254.88" r="3.51"/><circle cx="69.44" cy="254.88" r="3.51"/><circle cx="84.86" cy="254.88" r="3.51"/><circle cx="100.3" cy="254.88" r="3.51"/><circle cx="115.72" cy="254.88" r="3.51"/><circle cx="131.16" cy="254.88" r="3.51"/><circle cx="146.59" cy="254.88" r="3.51"/><circle cx="162.01" cy="254.88" r="3.51"/><circle cx="177.44" cy="254.88" r="3.51"/><circle cx="192.88" cy="254.88" r="3.51"/><circle cx="208.31" cy="254.88" r="3.51"/><circle cx="223.73" cy="254.88" r="3.51"/><circle cx="239.16" cy="254.88" r="3.51"/><circle cx="254.59" cy="254.88" r="3.51"/><circle cx="270.02" cy="254.88" r="3.51"/><circle cx="285.45" cy="254.88" r="3.51"/><circle cx="300.88" cy="254.88" r="3.51"/><circle cx="316.31" cy="254.88" r="3.51"/><circle cx="331.75" cy="254.88" r="3.51"/><circle cx="347.18" cy="254.88" r="3.51"/><circle cx="362.61" cy="254.88" r="3.51"/><circle cx="378.03" cy="254.88" r="3.51"/><circle cx="393.46" cy="254.88" r="3.51"/><circle cx="408.89" cy="254.88" r="3.51"/><circle cx="424.32" cy="254.88" r="3.51"/><circle cx="439.75" cy="254.88" r="3.51"/><circle cx="455.19" cy="254.88" r="3.51"/><circle cx="470.62" cy="254.88" r="3.51"/><circle cx="486.05" cy="254.88" r="3.51"/><circle cx="0" cy="270.32" r="3.29"/><circle cx="15.43" cy="270.32" r="3.29"/><circle cx="30.86" cy="270.32" r="3.29"/><circle cx="46.29" cy="270.32" r="3.29"/><circle cx="61.72" cy="270.32" r="3.29"/><circle cx="77.15" cy="270.32" r="3.29"/><circle cx="92.58" cy="270.32" r="3.29"/><circle cx="108.01" cy="270.32" r="3.29"/><circle cx="123.44" cy="270.32" r="3.29"/><circle cx="138.87" cy="270.32" r="3.29"/><circle cx="154.3" cy="270.32" r="3.29"/><circle cx="169.73" cy="270.32" r="3.29"/><circle cx="185.16" cy="270.32" r="3.29"/><circle cx="200.59" cy="270.32" r="3.29"/><circle cx="216.02" cy="270.32" r="3.29"/><circle cx="231.45" cy="270.32" r="3.29"/><circle cx="246.88" cy="270.32" r="3.29"/><circle cx="262.31" cy="270.32" r="3.29"/><circle cx="277.74" cy="270.32" r="3.29"/><circle cx="293.17" cy="270.32" r="3.29"/><circle cx="308.6" cy="270.32" r="3.29"/><circle cx="324.03" cy="270.32" r="3.29"/><circle cx="339.46" cy="270.32" r="3.29"/><circle cx="354.89" cy="270.32" r="3.29"/><circle cx="370.32" cy="270.32" r="3.29"/><circle cx="385.75" cy="270.32" r="3.29"/><circle cx="401.18" cy="270.32" r="3.29"/><circle cx="416.61" cy="270.32" r="3.29"/><circle cx="432.04" cy="270.32" r="3.29"/><circle cx="447.47" cy="270.32" r="3.29"/><circle cx="462.9" cy="270.32" r="3.29"/><circle cx="478.33" cy="270.32" r="3.29"/><circle cx="493.76" cy="270.32" r="3.29"/></g><rect x="410.2" y="4.2" width="3.7" height="19.2" fill="#000"/><rect x="413.8" y="4.2" width="77.6" height="19.2" fill="url(#bg2)"/><rect x="410.2" y="27.4" width="3.7" height="19.4" fill="#000"/><rect x="413.8" y="27.4" width="77.6" height="19.4" fill="url(#bg2)"/><rect x="410.2" y="50.4" width="3.7" height="19.5" fill="#000"/><rect x="413.8" y="50.4" width="77.6" height="19.5" fill="url(#bg2)"/><rect x="410.2" y="73.3" width="3.7" height="19.5" fill="#000"/><rect x="413.8" y="73.3" width="77.6" height="19.5" fill="url(#bg2)"/></g></svg>
<div class="t" style="left:443.04px;top:630.15px;font-size:6.2px;color:#fff;">Button</div>
<div class="t" style="left:443.04px;top:653.45px;font-size:6.2px;color:#fff;">Button</div>
<div class="t" style="left:443.04px;top:676.5px;font-size:6.2px;color:#fff;">Button</div>
<div class="t" style="left:443.04px;top:699.4px;font-size:6.2px;color:#fff;">Button</div>
<div class="b" style="left:0px;top:898.5px;width:498px;height:1.2px;background:#191919;"></div>
<div class="b" style="left:0px;top:899.6px;width:498px;height:4.4px;background:#2a2a2a;"></div>
</div>
<div class="b" style="left:1059px;top:899.6px;width:4px;height:4.4px;background:#2a2a2a"></div>
</body></html>
